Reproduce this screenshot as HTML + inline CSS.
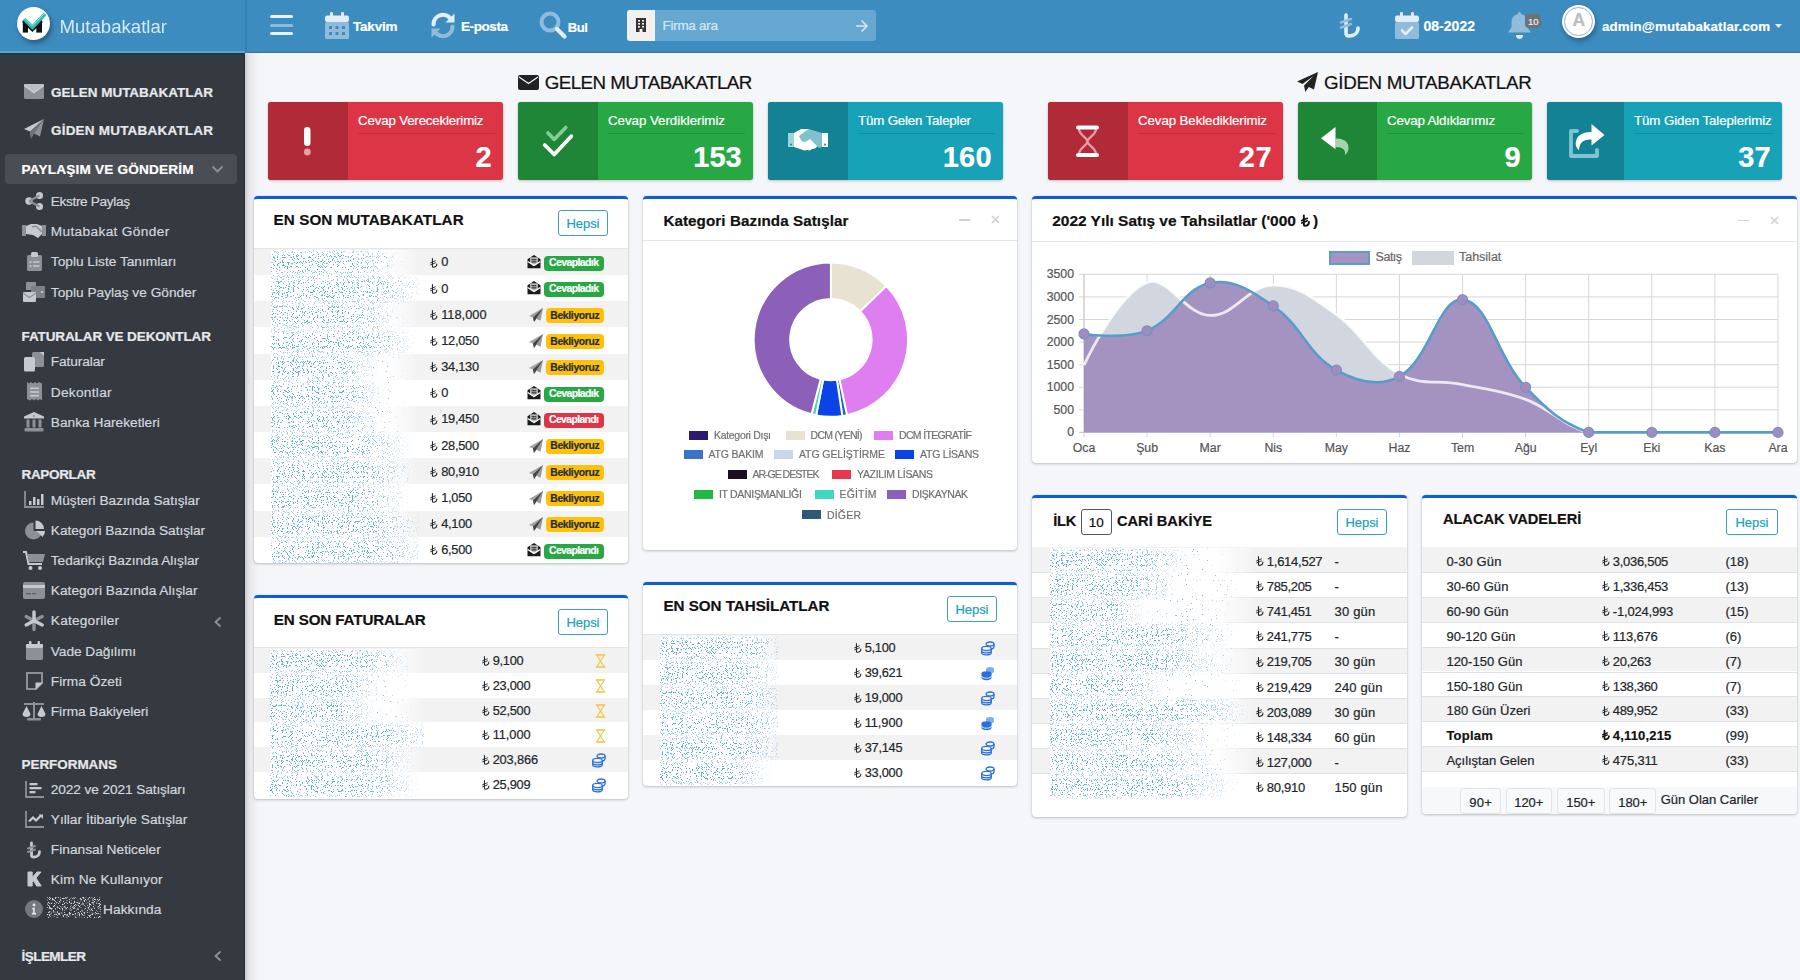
<!DOCTYPE html><html><head><meta charset="utf-8"><title>Mutabakatlar</title><style>
html,body{margin:0;padding:0;}
body{width:1800px;height:980px;overflow:hidden;position:relative;background:#f4f6f9;font-family:"Liberation Sans",sans-serif;}
.t{position:absolute;white-space:nowrap;line-height:1;-webkit-text-stroke-width:0.2px;}
.i{position:absolute;overflow:visible;}
.b{position:absolute;box-sizing:border-box;}
</style></head><body>
<svg width="0" height="0" style="position:absolute"><defs>
<symbol id="tl" viewBox="0 0 10 14"><path d="M3.2 0.5V11.6c0 .8.4 1.2 1.2 1.2 3 0 5-2 5-5" fill="none" stroke="currentColor" stroke-width="1.7" stroke-linecap="round"/><path d="M0.6 6.3L7.2 3.6M0.6 9.2L7.2 6.5" stroke="currentColor" stroke-width="1.5" stroke-linecap="round"/></symbol>
<filter id="nz" x="0" y="0" width="100%" height="100%"><feTurbulence type="fractalNoise" baseFrequency="1.2" numOctaves="1" seed="3"/><feColorMatrix type="matrix" values="0 0 0 0 0.12  0 0 0 0 0.38  0 0 0 0 0.8  30 0 0 0 -18"/></filter><filter id="nzm" x="0" y="0" width="100%" height="100%"><feTurbulence type="fractalNoise" baseFrequency="1.2" numOctaves="1" seed="5"/><feColorMatrix type="matrix" values="0 0 0 0 0.2  0 0 0 0 0.47  0 0 0 0 0.85  16 0 0 0 -10.1"/></filter><filter id="nzs" x="0" y="0" width="100%" height="100%"><feTurbulence type="fractalNoise" baseFrequency="1.2" numOctaves="1" seed="8"/><feColorMatrix type="matrix" values="0 0 0 0 0.25  0 0 0 0 0.47  0 0 0 0 0.8  30 0 0 0 -21.2"/></filter>
<filter id="nzw" x="0" y="0" width="100%" height="100%"><feTurbulence type="fractalNoise" baseFrequency="1.2" numOctaves="1" seed="7"/><feColorMatrix type="matrix" values="0 0 0 0 0.72  0 0 0 0 0.73  0 0 0 0 0.76  8 0 0 0 -4.2"/></filter>
<linearGradient id="fadeg" x1="0" y1="0" x2="1" y2="0"><stop offset="0" stop-color="#fff"/><stop offset=".62" stop-color="#fff"/><stop offset="1" stop-color="#000"/></linearGradient><mask id="fade" maskContentUnits="objectBoundingBox"><rect width="1" height="1" fill="url(#fadeg)"/></mask><linearGradient id="fadewg" x1="0" y1="0" x2="1" y2="0"><stop offset="0" stop-color="#fff"/><stop offset=".8" stop-color="#fff"/><stop offset="1" stop-color="#000"/></linearGradient><mask id="fadew" maskContentUnits="objectBoundingBox"><rect width="1" height="1" fill="url(#fadewg)"/></mask><mask id="fadevm" maskContentUnits="objectBoundingBox"><rect width="1" height="1" fill="url(#fadev)"/></mask><linearGradient id="fadev" x1="0" y1="0" x2="0" y2="1"><stop offset="0" stop-color="#222"/><stop offset=".3" stop-color="#fff"/><stop offset=".7" stop-color="#fff"/><stop offset="1" stop-color="#222"/></linearGradient></defs></svg>
<div class="b" style="left:245px;top:53px;width:14px;height:927px;background:linear-gradient(90deg,#c9ccd1,#e4e6ea 30%,#f4f6f9)"></div><div class="b" style="left:0;top:53px;width:245px;height:927px;background:#343a40"></div><div class="b" style="left:244px;top:53px;width:1px;height:927px;background:#2b3035"></div><div class="b" style="left:0;top:0;width:1800px;height:53px;background:#3c8cbf"></div><div class="b" style="left:0;top:51px;width:245px;height:2px;background:#5ea3c9"></div><div class="b" style="left:245px;top:52px;width:1555px;height:1px;background:#2f77a6"></div><div class="b" style="left:0;top:53px;width:245px;height:2px;background:#1f3a4f"></div><div class="b" style="left:245px;top:0;width:3px;height:53px;background:linear-gradient(90deg,#3279a8,#3c8cbf)"></div><div class="b" style="left:17px;top:7px;width:33px;height:33px;border-radius:50%;background:#fff;box-shadow:2px 3px 5px rgba(0,0,0,.35)"></div><svg class="i" style="left:17px;top:7px;width:33px;height:33px;" viewBox="0 0 33 33"><rect x="5.8" y="13.3" width="5.2" height="12.3" fill="#111"/><rect x="19.3" y="13.3" width="5.7" height="12.3" fill="#111"/><path d="M6.5 13.5L15.4 22.3 24.5 13.5" fill="none" stroke="#111" stroke-width="4"/><path d="M7.2 12L15.4 20.3 28 7" fill="none" stroke="#2bbdb2" stroke-width="3.8"/><path d="M7.8 11.4L15.4 19 27.3 6.5" fill="none" stroke="#8af2ee" stroke-width="0.9"/></svg><div class="t" style="left:59.50px;top:17.76px;font-size:18.6px;letter-spacing:0.001px;color:#e6f3fb;-webkit-text-stroke-width:0;opacity:.9;">Mutabakatlar</div><div class="b" style="left:270px;top:15px;width:23px;height:3.2px;border-radius:2px;background:#e8f2f9"></div><div class="b" style="left:270px;top:23.6px;width:23px;height:3.2px;border-radius:2px;background:#8fbcdb"></div><div class="b" style="left:270px;top:32px;width:23px;height:3.2px;border-radius:2px;background:#e8f2f9"></div><svg class="i" style="left:325px;top:12px;width:24px;height:27px;" viewBox="0 0 24 27"><rect x="0" y="3.5" width="24" height="6.5" rx="2" fill="#e3eef6"/><rect x="0" y="10" width="24" height="17" rx="1.5" fill="#8fbcdb"/><rect x="5" y="0" width="3" height="6" rx="1.3" fill="#e3eef6"/><rect x="16" y="0" width="3" height="6" rx="1.3" fill="#e3eef6"/><g fill="#3c8cbf"><rect x="4" y="14" width="3" height="3"/><rect x="10.5" y="14" width="3" height="3"/><rect x="17" y="14" width="3" height="3"/><rect x="4" y="20" width="3" height="3"/><rect x="10.5" y="20" width="3" height="3"/><rect x="17" y="20" width="3" height="3"/></g></svg><div class="t" style="left:353.00px;top:20.07px;font-size:13.5px;font-weight:bold;letter-spacing:-0.205px;color:#ffffff;">Takvim</div><svg class="i" style="left:430px;top:12px;width:26px;height:27px;" viewBox="0 0 26 27"><path d="M3.5 12.5A9.5 9.5 0 0 1 20.5 6.5" fill="none" stroke="#e3eef6" stroke-width="4.2" stroke-linecap="round"/><path d="M24.5 1.5v9h-9z" fill="#e3eef6"/><path d="M22.5 14.5A9.5 9.5 0 0 1 5.5 20.5" fill="none" stroke="#8fbcdb" stroke-width="4.2" stroke-linecap="round"/><path d="M1.5 25.5v-9h9z" fill="#8fbcdb"/></svg><div class="t" style="left:461.00px;top:20.07px;font-size:13.5px;font-weight:bold;letter-spacing:-0.417px;color:#ffffff;">E-posta</div><svg class="i" style="left:539px;top:11px;width:28px;height:28px;" viewBox="0 0 28 28"><circle cx="11" cy="11" r="8.5" fill="none" stroke="#8fbcdb" stroke-width="4"/><path d="M18 18l7.5 7.5" stroke="#e3eef6" stroke-width="4.2" stroke-linecap="round"/></svg><div class="t" style="left:567.80px;top:20.50px;font-size:13px;font-weight:bold;letter-spacing:-0.470px;color:#ffffff;">Bul</div><div class="b" style="left:627px;top:10px;width:249px;height:31px;border-radius:3px;background:#66a8d1"></div><div class="b" style="left:627px;top:10px;width:28px;height:31px;border-radius:3px 0 0 3px;background:#f3f1ef"></div><svg class="i" style="left:636px;top:18px;width:10px;height:14px;" viewBox="0 0 10 14"><path d="M0 0h10v14H6.5v-3h-3v3H0z" fill="#333"/><g fill="#f3f1ef"><rect x="2" y="2" width="2" height="1.6"/><rect x="6" y="2" width="2" height="1.6"/><rect x="2" y="5" width="2" height="1.6"/><rect x="6" y="5" width="2" height="1.6"/><rect x="2" y="8" width="2" height="1.6"/><rect x="6" y="8" width="2" height="1.6"/></g></svg><div class="t" style="left:662.50px;top:19.37px;font-size:13.5px;letter-spacing:-0.282px;color:#d4e8f5;">Firma ara</div><svg class="i" style="left:856px;top:20px;width:12px;height:12px;" viewBox="0 0 12 12"><path d="M0.5 6h10M6 1l5 5-5 5" fill="none" stroke="#d4e8f5" stroke-width="1.6" stroke-linecap="round" stroke-linejoin="round"/></svg><svg class="i" style="left:1339px;top:13px;width:22px;height:25px;" viewBox="0 0 22 25"><path d="M7 2v18c0 2 1 3 3 3 5 0 9-3 9-8" fill="none" stroke="#e3eef6" stroke-width="3.6" stroke-linecap="round"/><path d="M2 9.5l10-3.5M2 14.5l10-3.5" stroke="#8fbcdb" stroke-width="2.6" stroke-linecap="round"/></svg><svg class="i" style="left:1395px;top:12px;width:24px;height:27px;" viewBox="0 0 24 27"><rect x="0" y="3.5" width="24" height="6.5" rx="2" fill="#e3eef6"/><rect x="0" y="10" width="24" height="17" rx="1.5" fill="#8fbcdb"/><rect x="5" y="0" width="3" height="6" rx="1.3" fill="#e3eef6"/><rect x="16" y="0" width="3" height="6" rx="1.3" fill="#e3eef6"/><path d="M7 18.5l3.5 3.5 6.5-6.5" fill="none" stroke="#e3eef6" stroke-width="2.6" stroke-linecap="round" stroke-linejoin="round"/></svg><div class="t" style="left:1423.50px;top:19.45px;font-size:14px;font-weight:bold;letter-spacing:0.020px;color:#ffffff;">08-2022</div><svg class="i" style="left:1507px;top:12px;width:25px;height:27px;" viewBox="0 0 25 27"><path d="M12.5 2c5 0 8 3.5 8 8.5v5l3.5 5H1l3.5-5v-5C4.5 5.5 7.5 2 12.5 2z" fill="#8fbcdb"/><circle cx="12.5" cy="1.8" r="1.8" fill="#8fbcdb"/><path d="M9 23h7c0 2.5-1.5 4-3.5 4S9 25.5 9 23z" fill="#e3eef6"/></svg><div class="b" style="left:1525px;top:14px;width:16px;height:14px;border-radius:4px;background:#6c7278"></div><div class="t" style="left:1528.05px;top:16.66px;font-size:9.5px;letter-spacing:-0.067px;color:#f0f0f0;">10</div><div class="b" style="left:1562px;top:5px;width:33px;height:33px;border-radius:50%;background:#fff;box-shadow:1px 3px 5px rgba(0,0,0,.3)"></div><div class="b" style="left:1564px;top:7px;width:29px;height:29px;border-radius:50%;border:1.2px solid #8fb3cf"></div><div class="t" style="left:1572.48px;top:12.49px;font-size:17.5px;font-weight:bold;color:#bdbdbd;">A</div><div class="t" style="left:1602.00px;top:20.04px;font-size:13.3px;font-weight:bold;letter-spacing:0.134px;color:#ffffff;">admin@mutabakatlar.com</div><svg class="i" style="left:1775px;top:24px;width:7px;height:4px;" viewBox="0 0 7 4"><path d="M0 0h7L3.5 4z" fill="#e6f0f7"/></svg><svg class="i" style="left:24px;top:84px;width:20px;height:15px;" viewBox="0 0 20 15"><rect x="0" y="0" width="20" height="15" rx="1.5" fill="#8c9197"/><path d="M0.5 1.5L10 8.5l9.5-7" fill="none" stroke="#c6cad0" stroke-width="1.6"/><path d="M0 0h20v2L10 9 0 2z" fill="#c6cad0" opacity=".8"/></svg><div class="t" style="left:51.00px;top:85.57px;font-size:13.5px;font-weight:bold;letter-spacing:-0.014px;color:#e6e8eb;">GELEN MUTABAKATLAR</div><svg class="i" style="left:24px;top:119px;width:20px;height:20px;" viewBox="0 0 20 20"><path d="M20 0L0 10l6 2.5z" fill="#c6cad0"/><path d="M20 0L6 12.5l1 7 3-5 6 3z" fill="#8c9197"/><path d="M20 0L6 12.5 7 19.5z" fill="#6f747a"/></svg><div class="t" style="left:51.00px;top:123.57px;font-size:13.5px;font-weight:bold;letter-spacing:0.207px;color:#e6e8eb;">GİDEN MUTABAKATLAR</div><div class="b" style="left:5px;top:154px;width:232px;height:30px;border-radius:4px;background:#494e54"></div><div class="t" style="left:21.50px;top:163.09px;font-size:13.6px;font-weight:bold;letter-spacing:0.188px;color:#ffffff;">PAYLAŞIM VE GÖNDERİM</div><svg class="i" style="left:212px;top:166px;width:11px;height:7px;" viewBox="0 0 11 7"><path d="M1 1l4.5 4.5L10 1" fill="none" stroke="#8d9298" stroke-width="1.8" stroke-linecap="round"/></svg><svg class="i" style="left:25px;top:192px;width:19px;height:18px;" viewBox="0 0 19 18"><circle cx="14.5" cy="3.5" r="3.5" fill="#c6cad0"/><circle cx="14.5" cy="14.5" r="3.5" fill="#c6cad0"/><circle cx="4" cy="9" r="3.7" fill="#c6cad0"/><path d="M4 9L14.5 3.5M4 9l10.5 5.5" stroke="#8c9197" stroke-width="2"/></svg><div class="t" style="left:50.80px;top:194.90px;font-size:13.7px;letter-spacing:-0.373px;color:#d3d7dd;">Ekstre Paylaş</div><svg class="i" style="left:22px;top:223px;width:24px;height:16px;" viewBox="0 0 24 16"><rect x="0" y="2" width="4" height="11" fill="#8c9197"/><rect x="20" y="2" width="4" height="11" fill="#8c9197"/><path d="M4 3l5-2h6l5 2v8l-4 4-5-3-7-1z" fill="#c6cad0"/><path d="M10 4l4-1 6 6" fill="none" stroke="#8c9197" stroke-width="1.5"/></svg><div class="t" style="left:50.80px;top:225.30px;font-size:13.7px;letter-spacing:0.335px;color:#d3d7dd;">Mutabakat Gönder</div><svg class="i" style="left:27px;top:252px;width:15px;height:19px;" viewBox="0 0 15 19"><rect x="0" y="3" width="15" height="16" rx="1.5" fill="#8c9197"/><rect x="4" y="0" width="7" height="5" rx="1.5" fill="#c6cad0"/><g fill="#c8ccd1"><circle cx="3.5" cy="10" r="1"/><circle cx="3.5" cy="14" r="1"/><rect x="6" y="9.3" width="6.5" height="1.4"/><rect x="6" y="13.3" width="6.5" height="1.4"/></g></svg><div class="t" style="left:50.80px;top:255.00px;font-size:13.7px;letter-spacing:0.009px;color:#d3d7dd;">Toplu Liste Tanımları</div><svg class="i" style="left:23px;top:282px;width:22px;height:20px;" viewBox="0 0 22 20"><rect x="3" y="0" width="10" height="8" rx="1" fill="#8c9197"/><rect x="8" y="4" width="14" height="12" rx="1" fill="#7d8288"/><rect x="18" y="9" width="2" height="2" fill="#c6cad0"/><rect x="0" y="10" width="13" height="10" rx="1" fill="#c6cad0"/><path d="M0 11l6.5 4.5L13 11" fill="none" stroke="#8c9197" stroke-width="1.2"/></svg><div class="t" style="left:50.80px;top:286.10px;font-size:13.7px;letter-spacing:0.013px;color:#d3d7dd;">Toplu Paylaş ve Gönder</div><div class="t" style="left:21.50px;top:330.27px;font-size:13.5px;font-weight:bold;letter-spacing:-0.107px;color:#e6e8eb;">FATURALAR VE DEKONTLAR</div><svg class="i" style="left:24px;top:352px;width:20px;height:20px;" viewBox="0 0 20 20"><rect x="8" y="0" width="12" height="15" rx="1.5" fill="#8c9197"/><path d="M16 0h4v4z" fill="#c6cad0"/><rect x="0" y="5" width="11" height="14.5" rx="1.5" fill="#c6cad0"/></svg><div class="t" style="left:50.80px;top:355.40px;font-size:13.7px;letter-spacing:-0.096px;color:#d3d7dd;">Faturalar</div><svg class="i" style="left:27px;top:382px;width:15px;height:20px;" viewBox="0 0 15 20"><path d="M0 0l2 1.5 2-1.5 2 1.5 2-1.5 2 1.5 2-1.5 3 1.5V18.5l-2-1.5-2 1.5-2-1.5-2 1.5-2-1.5-2 1.5-3-1.5z" fill="#8c9197"/><g fill="#c6cad0"><rect x="3" y="5.5" width="9" height="1.6"/><rect x="3" y="9.2" width="9" height="1.6"/><rect x="3" y="12.9" width="9" height="1.6"/></g></svg><div class="t" style="left:50.80px;top:386.00px;font-size:13.7px;letter-spacing:0.278px;color:#d3d7dd;">Dekontlar</div><svg class="i" style="left:24px;top:412px;width:20px;height:20px;" viewBox="0 0 20 20"><path d="M10 0l10 4.5v2H0v-2z" fill="#c6cad0"/><circle cx="10" cy="4" r="1" fill="#8c9197"/><g fill="#8c9197"><rect x="2.5" y="7.5" width="3" height="8"/><rect x="8.5" y="7.5" width="3" height="8"/><rect x="14.5" y="7.5" width="3" height="8"/><rect x="0.5" y="16" width="19" height="3.5" rx="1"/></g></svg><div class="t" style="left:50.80px;top:415.80px;font-size:13.7px;letter-spacing:0.013px;color:#d3d7dd;">Banka Hareketleri</div><div class="t" style="left:21.50px;top:468.27px;font-size:13.5px;font-weight:bold;letter-spacing:-0.328px;color:#e6e8eb;">RAPORLAR</div><svg class="i" style="left:24px;top:491px;width:20px;height:17px;" viewBox="0 0 20 17"><path d="M1 0v16h19" fill="none" stroke="#8c9197" stroke-width="1.8"/><g fill="#c6cad0"><rect x="5" y="10" width="2.5" height="4"/><rect x="9" y="6" width="2.5" height="8"/><rect x="13" y="8" width="2.5" height="6"/><rect x="17" y="3" width="2.5" height="11"/></g></svg><div class="t" style="left:50.80px;top:494.30px;font-size:13.7px;letter-spacing:-0.005px;color:#d3d7dd;">Müşteri Bazında Satışlar</div><svg class="i" style="left:25px;top:520px;width:20px;height:20px;" viewBox="0 0 20 20"><path d="M8.5 2.5A8.5 8.5 0 1 0 17 11H8.5z" fill="#8c9197"/><path d="M10.5 0.5A8.5 8.5 0 0 1 19 9h-8.5z" fill="#c6cad0"/><path d="M11.5 11H20a8.5 8.5 0 0 1-2.5 6z" fill="#c6cad0"/></svg><div class="t" style="left:50.80px;top:524.40px;font-size:13.7px;letter-spacing:-0.038px;color:#d3d7dd;">Kategori Bazında Satışlar</div><svg class="i" style="left:23px;top:551px;width:22px;height:19px;" viewBox="0 0 22 19"><path d="M0 1h3l2.5 12H19" fill="none" stroke="#c6cad0" stroke-width="2"/><path d="M4.5 3H22l-2 8H6z" fill="#8c9197"/><circle cx="7.5" cy="17" r="2" fill="#c6cad0"/><circle cx="17" cy="17" r="2" fill="#c6cad0"/></svg><div class="t" style="left:50.80px;top:554.20px;font-size:13.7px;letter-spacing:-0.036px;color:#d3d7dd;">Tedarikçi Bazında Alışlar</div><svg class="i" style="left:23px;top:582px;width:22px;height:17px;" viewBox="0 0 22 17"><rect x="0" y="0" width="22" height="17" rx="2" fill="#8c9197"/><rect x="0" y="3" width="22" height="3" fill="#c6cad0"/><rect x="3" y="11" width="5" height="1.3" fill="#5a5f65"/><rect x="9" y="11" width="4" height="1.3" fill="#5a5f65"/></svg><div class="t" style="left:50.80px;top:584.40px;font-size:13.7px;letter-spacing:0.029px;color:#d3d7dd;">Kategori Bazında Alışlar</div><svg class="i" style="left:25px;top:611px;width:18px;height:19px;" viewBox="0 0 18 19"><path d="M9 9.7L1.2 5.5M9 9.7l8.2-4.2M9 9.7v8.8" stroke="#8c9197" stroke-width="3.4" stroke-linecap="round"/><path d="M9 9.7V1M9 9.7L1.2 14M9 9.7l8.2 4.3" stroke="#c6cad0" stroke-width="3.4" stroke-linecap="round"/></svg><div class="t" style="left:50.80px;top:614.10px;font-size:13.7px;letter-spacing:0.201px;color:#d3d7dd;">Kategoriler</div><svg class="i" style="left:214px;top:617px;width:7px;height:10px;" viewBox="0 0 7 10"><path d="M6 1L1.5 5 6 9" fill="none" stroke="#8d9298" stroke-width="1.8" stroke-linecap="round"/></svg><svg class="i" style="left:26px;top:641px;width:17px;height:19px;" viewBox="0 0 17 19"><rect x="0" y="3" width="17" height="16" rx="1.5" fill="#8c9197"/><rect x="0" y="3" width="17" height="4" rx="1" fill="#c6cad0"/><rect x="3" y="0" width="2.5" height="4.5" rx="1" fill="#c6cad0"/><rect x="11.5" y="0" width="2.5" height="4.5" rx="1" fill="#c6cad0"/></svg><div class="t" style="left:50.80px;top:644.90px;font-size:13.7px;letter-spacing:-0.043px;color:#d3d7dd;">Vade Dağılımı</div><svg class="i" style="left:26px;top:672px;width:17px;height:18px;" viewBox="0 0 17 18"><path d="M1 1h15v10l-6 6H1z" fill="none" stroke="#8c9197" stroke-width="2"/><path d="M9.5 17.5v-7h7.5z" fill="#c6cad0"/></svg><div class="t" style="left:50.80px;top:675.40px;font-size:13.7px;letter-spacing:0.028px;color:#d3d7dd;">Firma Özeti</div><svg class="i" style="left:22px;top:701px;width:24px;height:20px;" viewBox="0 0 24 20"><rect x="11" y="1" width="2" height="16" fill="#8c9197"/><rect x="5" y="17" width="14" height="2.5" rx="1" fill="#8c9197"/><rect x="2" y="2" width="20" height="2" fill="#8c9197"/><path d="M0.5 13L4.5 5l4 8c0 2-1.8 3-4 3s-4-1-4-3z" fill="#c6cad0"/><path d="M15.5 13L19.5 5l4 8c0 2-1.8 3-4 3s-4-1-4-3z" fill="#c6cad0"/></svg><div class="t" style="left:50.80px;top:705.00px;font-size:13.7px;letter-spacing:-0.034px;color:#d3d7dd;">Firma Bakiyeleri</div><div class="t" style="left:21.50px;top:758.27px;font-size:13.5px;font-weight:bold;letter-spacing:-0.056px;color:#e6e8eb;">PERFORMANS</div><svg class="i" style="left:25px;top:781px;width:19px;height:17px;" viewBox="0 0 19 17"><path d="M1 0v16h18" fill="none" stroke="#8c9197" stroke-width="1.8"/><g fill="#c6cad0"><rect x="4.5" y="2" width="8" height="2.3"/><rect x="4.5" y="6" width="12" height="2.3"/><rect x="4.5" y="10" width="6" height="2.3"/></g></svg><div class="t" style="left:50.80px;top:783.40px;font-size:13.7px;letter-spacing:-0.108px;color:#d3d7dd;">2022 ve 2021 Satışları</div><svg class="i" style="left:25px;top:811px;width:19px;height:17px;" viewBox="0 0 19 17"><path d="M1 0v16h18" fill="none" stroke="#8c9197" stroke-width="1.8"/><path d="M4 10.5l4-4 3 3 5-5" fill="none" stroke="#c6cad0" stroke-width="2.2"/><path d="M13.5 3.5H18V8z" fill="#c6cad0"/></svg><div class="t" style="left:50.80px;top:813.40px;font-size:13.7px;letter-spacing:0.014px;color:#d3d7dd;">Yıllar İtibariyle Satışlar</div><svg class="i" style="left:27px;top:842px;width:14px;height:17px;" viewBox="0 0 14 17"><path d="M4.5 1v12c0 1.5.8 2.2 2.2 2.2 3 0 5.8-2 5.8-5.5" fill="none" stroke="#c6cad0" stroke-width="2.8" stroke-linecap="round"/><path d="M1 6.5l7-2.5M1 10l7-2.5" stroke="#8c9197" stroke-width="2" stroke-linecap="round"/></svg><div class="t" style="left:50.80px;top:843.00px;font-size:13.7px;letter-spacing:0.027px;color:#d3d7dd;">Finansal Neticeler</div><svg class="i" style="left:27px;top:871px;width:14px;height:16px;" viewBox="0 0 14 16"><path d="M1 1h4.2v5.5L10 1h4l-5 6 5.2 8h-4.5L6.6 9.8 5.2 11.3V15H1z" fill="#c6cad0" stroke="#c6cad0" stroke-width="1" stroke-linejoin="round"/></svg><div class="t" style="left:50.80px;top:873.20px;font-size:13.7px;letter-spacing:0.135px;color:#d3d7dd;">Kim Ne Kullanıyor</div><svg class="i" style="left:25px;top:900px;width:18px;height:18px;" viewBox="0 0 18 18"><circle cx="9" cy="9" r="9" fill="#74797f"/><circle cx="9" cy="5" r="1.4" fill="#e8e8e8"/><path d="M7.3 7.8h2.4v5h1.3v1.7H6.9v-1.7h1.3v-3.3H7.3z" fill="#e8e8e8"/></svg><svg class="i" style="left:47px;top:897px;width:54px;height:21px"><rect width="54" height="21" filter="url(#nzw)"/></svg><div class="t" style="left:103.00px;top:902.60px;font-size:13.7px;letter-spacing:0.082px;color:#d3d7dd;">Hakkında</div><div class="t" style="left:21.50px;top:950.27px;font-size:13.5px;font-weight:bold;letter-spacing:-0.536px;color:#e6e8eb;">İŞLEMLER</div><svg class="i" style="left:214px;top:951px;width:7px;height:10px;" viewBox="0 0 7 10"><path d="M6 1L1.5 5 6 9" fill="none" stroke="#8d9298" stroke-width="1.8" stroke-linecap="round"/></svg><svg class="i" style="left:518px;top:75px;width:21px;height:15px;" viewBox="0 0 21 15"><rect x="0" y="0" width="21" height="15" rx="2" fill="#222"/><path d="M1 2l9.5 6.5L20 2" fill="none" stroke="#f4f6f9" stroke-width="1.3"/></svg><div class="t" style="left:544.70px;top:74.09px;font-size:18.8px;letter-spacing:-0.572px;color:#111111;">GELEN MUTABAKATLAR</div><svg class="i" style="left:1297px;top:72px;width:21px;height:20px;" viewBox="0 0 21 20"><path d="M21 0L0 9.5l5.5 2.6L16.5 4 7 13.5l1.3 6.5 3.5-5 5.2 2.6z" fill="#222"/></svg><div class="t" style="left:1324.00px;top:74.09px;font-size:18.8px;letter-spacing:-0.325px;color:#111111;">GİDEN MUTABAKATLAR</div><div class="b" style="left:268px;top:102px;width:235px;height:78px;border-radius:3px;background:#dc3545;box-shadow:0 0 1px rgba(0,0,0,.13),0 1px 3px rgba(0,0,0,.2);overflow:hidden"><div class="b" style="left:0;top:0;width:80px;height:78px;background:#b02a37"></div></div><div class="t" style="left:358.00px;top:114.44px;font-size:13.3px;letter-spacing:-0.162px;color:#ffffff;">Cevap Vereceklerimiz</div><div class="b" style="left:358px;top:132.5px;width:137px;height:1.2px;background:rgba(0,0,0,.13)"></div><div class="t" style="left:475.57px;top:142.65px;font-size:29px;font-weight:bold;color:#ffffff;">2</div><div class="b" style="left:518px;top:102px;width:235px;height:78px;border-radius:3px;background:#28a745;box-shadow:0 0 1px rgba(0,0,0,.13),0 1px 3px rgba(0,0,0,.2);overflow:hidden"><div class="b" style="left:0;top:0;width:80px;height:78px;background:#1f8537"></div></div><div class="t" style="left:608.00px;top:114.44px;font-size:13.3px;letter-spacing:-0.028px;color:#ffffff;">Cevap Verdiklerimiz</div><div class="b" style="left:608px;top:132.5px;width:137px;height:1.2px;background:rgba(0,0,0,.13)"></div><div class="t" style="left:693.30px;top:142.65px;font-size:29px;font-weight:bold;letter-spacing:0.007px;color:#ffffff;">153</div><div class="b" style="left:768px;top:102px;width:235px;height:78px;border-radius:3px;background:#17a2b8;box-shadow:0 0 1px rgba(0,0,0,.13),0 1px 3px rgba(0,0,0,.2);overflow:hidden"><div class="b" style="left:0;top:0;width:80px;height:78px;background:#128294"></div></div><div class="t" style="left:858.00px;top:114.44px;font-size:13.3px;letter-spacing:-0.161px;color:#ffffff;">Tüm Gelen Talepler</div><div class="b" style="left:858px;top:132.5px;width:137px;height:1.2px;background:rgba(0,0,0,.13)"></div><div class="t" style="left:942.70px;top:142.65px;font-size:29px;font-weight:bold;letter-spacing:0.307px;color:#ffffff;">160</div><div class="b" style="left:1048px;top:102px;width:235px;height:78px;border-radius:3px;background:#dc3545;box-shadow:0 0 1px rgba(0,0,0,.13),0 1px 3px rgba(0,0,0,.2);overflow:hidden"><div class="b" style="left:0;top:0;width:80px;height:78px;background:#b02a37"></div></div><div class="t" style="left:1138.00px;top:114.44px;font-size:13.3px;letter-spacing:-0.090px;color:#ffffff;">Cevap Beklediklerimiz</div><div class="b" style="left:1138px;top:132.5px;width:137px;height:1.2px;background:rgba(0,0,0,.13)"></div><div class="t" style="left:1238.70px;top:142.65px;font-size:29px;font-weight:bold;letter-spacing:0.743px;color:#ffffff;">27</div><div class="b" style="left:1298px;top:102px;width:234px;height:78px;border-radius:3px;background:#28a745;box-shadow:0 0 1px rgba(0,0,0,.13),0 1px 3px rgba(0,0,0,.2);overflow:hidden"><div class="b" style="left:0;top:0;width:79px;height:78px;background:#1f8537"></div></div><div class="t" style="left:1387.00px;top:114.44px;font-size:13.3px;letter-spacing:-0.152px;color:#ffffff;">Cevap Aldıklarımız</div><div class="b" style="left:1387px;top:132.5px;width:137px;height:1.2px;background:rgba(0,0,0,.13)"></div><div class="t" style="left:1504.57px;top:142.65px;font-size:29px;font-weight:bold;color:#ffffff;">9</div><div class="b" style="left:1547px;top:102px;width:235px;height:78px;border-radius:3px;background:#17a2b8;box-shadow:0 0 1px rgba(0,0,0,.13),0 1px 3px rgba(0,0,0,.2);overflow:hidden"><div class="b" style="left:0;top:0;width:77px;height:78px;background:#128294"></div></div><div class="t" style="left:1634.00px;top:114.44px;font-size:13.3px;letter-spacing:-0.079px;color:#ffffff;">Tüm Giden Taleplerimiz</div><div class="b" style="left:1634px;top:132.5px;width:140px;height:1.2px;background:rgba(0,0,0,.13)"></div><div class="t" style="left:1738.20px;top:142.65px;font-size:29px;font-weight:bold;letter-spacing:0.243px;color:#ffffff;">37</div><svg class="i" style="left:303px;top:126px;width:10px;height:30px;" viewBox="0 0 10 30"><rect x="1" y="1" width="6.5" height="19" rx="3.2" fill="#fff"/><circle cx="4.3" cy="26" r="3.4" fill="#e8a1a8"/></svg><svg class="i" style="left:543px;top:125px;width:30px;height:31px;" viewBox="0 0 30 31"><path d="M5 8l6.2 6.4L22.8 2.5" fill="none" stroke="#86cc95" stroke-width="3.6" stroke-linecap="round" stroke-linejoin="round"/><path d="M1.7 20l9.5 9.5 17.1-18.3" fill="none" stroke="#fff" stroke-width="3.8" stroke-linecap="round" stroke-linejoin="round"/></svg><svg class="i" style="left:788px;top:128px;width:40px;height:25px;" viewBox="0 0 40 25"><rect x="0" y="5" width="6" height="14" fill="#9fd3dc"/><rect x="34" y="5" width="6" height="14" fill="#fff"/><path d="M6 5l7-4h6l4 1-7 7c-1 1-.5 2.5 1 2.5l5-3 9 8-4 4-3 .5-2 1.5-3-.5-2.5.5L6 19z" fill="#fff"/><path d="M11 8l8-6h5l10 3v14l-3 1-9-9-3 2c-2 1.5-5 1-6-1z" fill="#7fc2cd"/><rect x="34" y="5" width="6" height="14" fill="#fff"/><circle cx="3" cy="16.5" r="1" fill="#128294"/><circle cx="37" cy="16.5" r="1" fill="#128294"/></svg><svg class="i" style="left:1075px;top:125px;width:25px;height:33px;" viewBox="0 0 25 33"><path d="M4 4c0 6 8.5 9 8.5 12.5S4 23 4 29M21 4c0 6-8.5 9-8.5 12.5S21 23 21 29" fill="none" stroke="#e99aa2" stroke-width="2.4"/><rect x="1" y="0.5" width="23" height="4" rx="2" fill="#fff"/><rect x="1" y="28" width="23" height="4" rx="2" fill="#fff"/></svg><svg class="i" style="left:1321px;top:127px;width:33px;height:29px;" viewBox="0 0 33 29"><path d="M14.5 11.5c6 0 13 1.5 13 9.5 0 3-1.5 5.5-3.5 7 1-5-2-8-9.5-8z" fill="#a3d4ad"/><path d="M14.5 0L0 11.3l14.5 11z" fill="#fff"/></svg><svg class="i" style="left:1568px;top:124px;width:37px;height:34px;" viewBox="0 0 37 34"><path d="M9 7H3v25h26v-6" fill="none" stroke="#7fc4cf" stroke-width="3.8" stroke-linecap="round" stroke-linejoin="round"/><path d="M23.5 0L36.5 11 23.5 21.5v-6c-7 0-12 1.5-12.5 11-3-3-4-6-3-9.5 1.5-6 7.5-9 15.5-9z" fill="#fff"/></svg><div class="b" style="left:254px;top:196px;width:374px;height:367px;background:#fff;border-radius:4px;border-top:3px solid #0b5ed7;box-shadow:0 0 1px rgba(0,0,0,.2),0 1px 3px rgba(0,0,0,.22)"></div><div class="b" style="left:254px;top:248px;width:374px;height:1px;background:#e4e6e9"></div><div class="t" style="left:273.60px;top:212.43px;font-size:15.2px;font-weight:bold;letter-spacing:0.088px;color:#111;">EN SON MUTABAKATLAR</div><div class="b" style="left:558px;top:210px;width:50px;height:26px;border:1px solid #3fa3b3;border-radius:3px"></div><div class="t" style="left:566.50px;top:216.90px;font-size:13px;letter-spacing:-0.059px;color:#17a2b8;">Hepsi</div><div class="b" style="left:254px;top:249.00px;width:374px;height:26.17px;background:#f2f2f2"></div><div class="b" style="left:254px;top:301.33px;width:374px;height:26.17px;background:#f2f2f2"></div><div class="b" style="left:254px;top:353.67px;width:374px;height:26.17px;background:#f2f2f2"></div><div class="b" style="left:254px;top:406.00px;width:374px;height:26.17px;background:#f2f2f2"></div><div class="b" style="left:254px;top:458.33px;width:374px;height:26.17px;background:#f2f2f2"></div><div class="b" style="left:254px;top:510.67px;width:374px;height:26.17px;background:#f2f2f2"></div><svg class="i" style="left:271px;top:250px;width:148px;height:313.0px;overflow:hidden"><rect width="148" height="314.0" fill="#fff" opacity=".95" mask="url(#fadew)"/><g mask="url(#fadew)"><rect width="140" height="314.0" filter="url(#nzs)"/></g><g mask="url(#fade)"><g mask="url(#fadevm)"><rect x="0" y="-2.0" width="131" height="30.2" filter="url(#nz)"/></g></g><g mask="url(#fade)"><g mask="url(#fadevm)"><rect x="0" y="24.2" width="161" height="30.2" filter="url(#nz)"/></g></g><g mask="url(#fade)"><g mask="url(#fadevm)"><rect x="0" y="50.3" width="130" height="30.2" filter="url(#nz)"/></g></g><g mask="url(#fade)"><g mask="url(#fadevm)"><rect x="0" y="76.5" width="148" height="30.2" filter="url(#nz)"/></g></g><g mask="url(#fade)"><g mask="url(#fadevm)"><rect x="0" y="102.7" width="108" height="30.2" filter="url(#nz)"/></g></g><g mask="url(#fade)"><g mask="url(#fadevm)"><rect x="0" y="128.8" width="117" height="30.2" filter="url(#nz)"/></g></g><g mask="url(#fade)"><g mask="url(#fadevm)"><rect x="0" y="155.0" width="111" height="30.2" filter="url(#nz)"/></g></g><g mask="url(#fade)"><g mask="url(#fadevm)"><rect x="0" y="181.2" width="143" height="30.2" filter="url(#nz)"/></g></g><g mask="url(#fade)"><g mask="url(#fadevm)"><rect x="0" y="207.3" width="148" height="30.2" filter="url(#nz)"/></g></g><g mask="url(#fade)"><g mask="url(#fadevm)"><rect x="0" y="233.5" width="139" height="30.2" filter="url(#nz)"/></g></g><g mask="url(#fade)"><g mask="url(#fadevm)"><rect x="0" y="259.7" width="158" height="30.2" filter="url(#nz)"/></g></g><g mask="url(#fade)"><g mask="url(#fadevm)"><rect x="0" y="285.8" width="165" height="30.2" filter="url(#nz)"/></g></g></svg><svg class="i" style="left:430px;top:257.57px;width:7.30px;height:9.73px;color:#212529" viewBox="0 0 9 12"><path d="M3 0.6V10.2c0 .8.5 1.2 1.2 1.2 2.6 0 4.2-1.6 4.2-4" fill="none" stroke="currentColor" stroke-width="1.32" stroke-linecap="round"/><path d="M0.7 5.9L6.6 3.5M0.7 8.4L6.6 6" stroke="currentColor" stroke-width="1.1" stroke-linecap="round"/></svg><div class="t" style="left:441.14px;top:256.46px;font-size:12.8px;color:#212529;">0</div><svg class="i" style="left:527px;top:255.3px;width:14px;height:14px;" viewBox="0 0 14 14"><path d="M7 0L0.5 4.3V13.3H13.5V4.3z" fill="#1b1b1b"/><path d="M3 2.3H11V8.6L7 11 3 8.6z" fill="#b4b4b4"/><rect x="4.6" y="4.2" width="4.8" height="1.1" fill="#2a2a2a"/><rect x="4.6" y="6.3" width="4.8" height="1.1" fill="#2a2a2a"/><path d="M0.7 6.6L7 10.6 13.3 6.6" fill="none" stroke="#fff" stroke-width="1.2"/></svg><div class="b" style="left:544px;top:255.8px;width:60px;height:15px;border-radius:4px;background:#28a745"></div><div class="t" style="left:549.00px;top:258.30px;font-size:10.4px;font-weight:bold;letter-spacing:-0.541px;color:#fff;">Cevapladık</div><svg class="i" style="left:430px;top:283.74px;width:7.30px;height:9.73px;color:#212529" viewBox="0 0 9 12"><path d="M3 0.6V10.2c0 .8.5 1.2 1.2 1.2 2.6 0 4.2-1.6 4.2-4" fill="none" stroke="currentColor" stroke-width="1.32" stroke-linecap="round"/><path d="M0.7 5.9L6.6 3.5M0.7 8.4L6.6 6" stroke="currentColor" stroke-width="1.1" stroke-linecap="round"/></svg><div class="t" style="left:441.14px;top:282.63px;font-size:12.8px;color:#212529;">0</div><svg class="i" style="left:527px;top:281.4666666666667px;width:14px;height:14px;" viewBox="0 0 14 14"><path d="M7 0L0.5 4.3V13.3H13.5V4.3z" fill="#1b1b1b"/><path d="M3 2.3H11V8.6L7 11 3 8.6z" fill="#b4b4b4"/><rect x="4.6" y="4.2" width="4.8" height="1.1" fill="#2a2a2a"/><rect x="4.6" y="6.3" width="4.8" height="1.1" fill="#2a2a2a"/><path d="M0.7 6.6L7 10.6 13.3 6.6" fill="none" stroke="#fff" stroke-width="1.2"/></svg><div class="b" style="left:544px;top:281.9666666666667px;width:60px;height:15px;border-radius:4px;background:#28a745"></div><div class="t" style="left:549.00px;top:284.46px;font-size:10.4px;font-weight:bold;letter-spacing:-0.541px;color:#fff;">Cevapladık</div><svg class="i" style="left:430px;top:309.91px;width:7.30px;height:9.73px;color:#212529" viewBox="0 0 9 12"><path d="M3 0.6V10.2c0 .8.5 1.2 1.2 1.2 2.6 0 4.2-1.6 4.2-4" fill="none" stroke="currentColor" stroke-width="1.32" stroke-linecap="round"/><path d="M0.7 5.9L6.6 3.5M0.7 8.4L6.6 6" stroke="currentColor" stroke-width="1.1" stroke-linecap="round"/></svg><div class="t" style="left:441.14px;top:308.80px;font-size:12.8px;letter-spacing:0.032px;color:#212529;">118,000</div><svg class="i" style="left:529px;top:307.8333333333333px;width:14px;height:14px;" viewBox="0 0 14 14"><path d="M14 0L0 8l4 1.6z" fill="#a3a3a3"/><path d="M14 0L4 9.6 5 14l2.5-3.2 4 2z" fill="#9a9a9a"/><path d="M14 0L4 9.6 5 14z" fill="#444"/></svg><div class="b" style="left:546px;top:308.1333333333333px;width:58px;height:15px;border-radius:4px;background:#ffc107"></div><div class="t" style="left:550.25px;top:310.63px;font-size:10.4px;font-weight:bold;letter-spacing:-0.339px;color:#1f2d3d;">Bekliyoruz</div><svg class="i" style="left:430px;top:336.07px;width:7.30px;height:9.73px;color:#212529" viewBox="0 0 9 12"><path d="M3 0.6V10.2c0 .8.5 1.2 1.2 1.2 2.6 0 4.2-1.6 4.2-4" fill="none" stroke="currentColor" stroke-width="1.32" stroke-linecap="round"/><path d="M0.7 5.9L6.6 3.5M0.7 8.4L6.6 6" stroke="currentColor" stroke-width="1.1" stroke-linecap="round"/></svg><div class="t" style="left:441.14px;top:334.96px;font-size:12.8px;letter-spacing:-0.228px;color:#212529;">12,050</div><svg class="i" style="left:529px;top:334.0px;width:14px;height:14px;" viewBox="0 0 14 14"><path d="M14 0L0 8l4 1.6z" fill="#a3a3a3"/><path d="M14 0L4 9.6 5 14l2.5-3.2 4 2z" fill="#9a9a9a"/><path d="M14 0L4 9.6 5 14z" fill="#444"/></svg><div class="b" style="left:546px;top:334.3px;width:58px;height:15px;border-radius:4px;background:#ffc107"></div><div class="t" style="left:550.25px;top:336.80px;font-size:10.4px;font-weight:bold;letter-spacing:-0.339px;color:#1f2d3d;">Bekliyoruz</div><svg class="i" style="left:430px;top:362.24px;width:7.30px;height:9.73px;color:#212529" viewBox="0 0 9 12"><path d="M3 0.6V10.2c0 .8.5 1.2 1.2 1.2 2.6 0 4.2-1.6 4.2-4" fill="none" stroke="currentColor" stroke-width="1.32" stroke-linecap="round"/><path d="M0.7 5.9L6.6 3.5M0.7 8.4L6.6 6" stroke="currentColor" stroke-width="1.1" stroke-linecap="round"/></svg><div class="t" style="left:441.14px;top:361.13px;font-size:12.8px;letter-spacing:-0.228px;color:#212529;">34,130</div><svg class="i" style="left:529px;top:360.1666666666667px;width:14px;height:14px;" viewBox="0 0 14 14"><path d="M14 0L0 8l4 1.6z" fill="#a3a3a3"/><path d="M14 0L4 9.6 5 14l2.5-3.2 4 2z" fill="#9a9a9a"/><path d="M14 0L4 9.6 5 14z" fill="#444"/></svg><div class="b" style="left:546px;top:360.4666666666667px;width:58px;height:15px;border-radius:4px;background:#ffc107"></div><div class="t" style="left:550.25px;top:362.96px;font-size:10.4px;font-weight:bold;letter-spacing:-0.339px;color:#1f2d3d;">Bekliyoruz</div><svg class="i" style="left:430px;top:388.41px;width:7.30px;height:9.73px;color:#212529" viewBox="0 0 9 12"><path d="M3 0.6V10.2c0 .8.5 1.2 1.2 1.2 2.6 0 4.2-1.6 4.2-4" fill="none" stroke="currentColor" stroke-width="1.32" stroke-linecap="round"/><path d="M0.7 5.9L6.6 3.5M0.7 8.4L6.6 6" stroke="currentColor" stroke-width="1.1" stroke-linecap="round"/></svg><div class="t" style="left:441.14px;top:387.30px;font-size:12.8px;color:#212529;">0</div><svg class="i" style="left:527px;top:386.1333333333334px;width:14px;height:14px;" viewBox="0 0 14 14"><path d="M7 0L0.5 4.3V13.3H13.5V4.3z" fill="#1b1b1b"/><path d="M3 2.3H11V8.6L7 11 3 8.6z" fill="#b4b4b4"/><rect x="4.6" y="4.2" width="4.8" height="1.1" fill="#2a2a2a"/><rect x="4.6" y="6.3" width="4.8" height="1.1" fill="#2a2a2a"/><path d="M0.7 6.6L7 10.6 13.3 6.6" fill="none" stroke="#fff" stroke-width="1.2"/></svg><div class="b" style="left:544px;top:386.6333333333334px;width:60px;height:15px;border-radius:4px;background:#28a745"></div><div class="t" style="left:549.00px;top:389.13px;font-size:10.4px;font-weight:bold;letter-spacing:-0.541px;color:#fff;">Cevapladık</div><svg class="i" style="left:430px;top:414.57px;width:7.30px;height:9.73px;color:#212529" viewBox="0 0 9 12"><path d="M3 0.6V10.2c0 .8.5 1.2 1.2 1.2 2.6 0 4.2-1.6 4.2-4" fill="none" stroke="currentColor" stroke-width="1.32" stroke-linecap="round"/><path d="M0.7 5.9L6.6 3.5M0.7 8.4L6.6 6" stroke="currentColor" stroke-width="1.1" stroke-linecap="round"/></svg><div class="t" style="left:441.14px;top:413.46px;font-size:12.8px;letter-spacing:-0.228px;color:#212529;">19,450</div><svg class="i" style="left:527px;top:412.3px;width:14px;height:14px;" viewBox="0 0 14 14"><path d="M7 0L0.5 4.3V13.3H13.5V4.3z" fill="#1b1b1b"/><path d="M3 2.3H11V8.6L7 11 3 8.6z" fill="#b4b4b4"/><rect x="4.6" y="4.2" width="4.8" height="1.1" fill="#2a2a2a"/><rect x="4.6" y="6.3" width="4.8" height="1.1" fill="#2a2a2a"/><path d="M0.7 6.6L7 10.6 13.3 6.6" fill="none" stroke="#fff" stroke-width="1.2"/></svg><div class="b" style="left:544px;top:412.8px;width:60px;height:15px;border-radius:4px;background:#dc3545"></div><div class="t" style="left:549.00px;top:415.30px;font-size:10.4px;font-weight:bold;letter-spacing:-0.604px;color:#fff;">Cevaplandı</div><svg class="i" style="left:430px;top:440.74px;width:7.30px;height:9.73px;color:#212529" viewBox="0 0 9 12"><path d="M3 0.6V10.2c0 .8.5 1.2 1.2 1.2 2.6 0 4.2-1.6 4.2-4" fill="none" stroke="currentColor" stroke-width="1.32" stroke-linecap="round"/><path d="M0.7 5.9L6.6 3.5M0.7 8.4L6.6 6" stroke="currentColor" stroke-width="1.1" stroke-linecap="round"/></svg><div class="t" style="left:441.14px;top:439.63px;font-size:12.8px;letter-spacing:-0.228px;color:#212529;">28,500</div><svg class="i" style="left:529px;top:438.6666666666667px;width:14px;height:14px;" viewBox="0 0 14 14"><path d="M14 0L0 8l4 1.6z" fill="#a3a3a3"/><path d="M14 0L4 9.6 5 14l2.5-3.2 4 2z" fill="#9a9a9a"/><path d="M14 0L4 9.6 5 14z" fill="#444"/></svg><div class="b" style="left:546px;top:438.9666666666667px;width:58px;height:15px;border-radius:4px;background:#ffc107"></div><div class="t" style="left:550.25px;top:441.46px;font-size:10.4px;font-weight:bold;letter-spacing:-0.339px;color:#1f2d3d;">Bekliyoruz</div><svg class="i" style="left:430px;top:466.91px;width:7.30px;height:9.73px;color:#212529" viewBox="0 0 9 12"><path d="M3 0.6V10.2c0 .8.5 1.2 1.2 1.2 2.6 0 4.2-1.6 4.2-4" fill="none" stroke="currentColor" stroke-width="1.32" stroke-linecap="round"/><path d="M0.7 5.9L6.6 3.5M0.7 8.4L6.6 6" stroke="currentColor" stroke-width="1.1" stroke-linecap="round"/></svg><div class="t" style="left:441.14px;top:465.80px;font-size:12.8px;letter-spacing:-0.228px;color:#212529;">80,910</div><svg class="i" style="left:529px;top:464.83333333333337px;width:14px;height:14px;" viewBox="0 0 14 14"><path d="M14 0L0 8l4 1.6z" fill="#a3a3a3"/><path d="M14 0L4 9.6 5 14l2.5-3.2 4 2z" fill="#9a9a9a"/><path d="M14 0L4 9.6 5 14z" fill="#444"/></svg><div class="b" style="left:546px;top:465.1333333333334px;width:58px;height:15px;border-radius:4px;background:#ffc107"></div><div class="t" style="left:550.25px;top:467.63px;font-size:10.4px;font-weight:bold;letter-spacing:-0.339px;color:#1f2d3d;">Bekliyoruz</div><svg class="i" style="left:430px;top:493.07px;width:7.30px;height:9.73px;color:#212529" viewBox="0 0 9 12"><path d="M3 0.6V10.2c0 .8.5 1.2 1.2 1.2 2.6 0 4.2-1.6 4.2-4" fill="none" stroke="currentColor" stroke-width="1.32" stroke-linecap="round"/><path d="M0.7 5.9L6.6 3.5M0.7 8.4L6.6 6" stroke="currentColor" stroke-width="1.1" stroke-linecap="round"/></svg><div class="t" style="left:441.14px;top:491.96px;font-size:12.8px;letter-spacing:-0.256px;color:#212529;">1,050</div><svg class="i" style="left:529px;top:491.0px;width:14px;height:14px;" viewBox="0 0 14 14"><path d="M14 0L0 8l4 1.6z" fill="#a3a3a3"/><path d="M14 0L4 9.6 5 14l2.5-3.2 4 2z" fill="#9a9a9a"/><path d="M14 0L4 9.6 5 14z" fill="#444"/></svg><div class="b" style="left:546px;top:491.3px;width:58px;height:15px;border-radius:4px;background:#ffc107"></div><div class="t" style="left:550.25px;top:493.80px;font-size:10.4px;font-weight:bold;letter-spacing:-0.339px;color:#1f2d3d;">Bekliyoruz</div><svg class="i" style="left:430px;top:519.24px;width:7.30px;height:9.73px;color:#212529" viewBox="0 0 9 12"><path d="M3 0.6V10.2c0 .8.5 1.2 1.2 1.2 2.6 0 4.2-1.6 4.2-4" fill="none" stroke="currentColor" stroke-width="1.32" stroke-linecap="round"/><path d="M0.7 5.9L6.6 3.5M0.7 8.4L6.6 6" stroke="currentColor" stroke-width="1.1" stroke-linecap="round"/></svg><div class="t" style="left:441.14px;top:518.13px;font-size:12.8px;letter-spacing:-0.256px;color:#212529;">4,100</div><svg class="i" style="left:529px;top:517.1666666666667px;width:14px;height:14px;" viewBox="0 0 14 14"><path d="M14 0L0 8l4 1.6z" fill="#a3a3a3"/><path d="M14 0L4 9.6 5 14l2.5-3.2 4 2z" fill="#9a9a9a"/><path d="M14 0L4 9.6 5 14z" fill="#444"/></svg><div class="b" style="left:546px;top:517.4666666666667px;width:58px;height:15px;border-radius:4px;background:#ffc107"></div><div class="t" style="left:550.25px;top:519.96px;font-size:10.4px;font-weight:bold;letter-spacing:-0.339px;color:#1f2d3d;">Bekliyoruz</div><svg class="i" style="left:430px;top:545.41px;width:7.30px;height:9.73px;color:#212529" viewBox="0 0 9 12"><path d="M3 0.6V10.2c0 .8.5 1.2 1.2 1.2 2.6 0 4.2-1.6 4.2-4" fill="none" stroke="currentColor" stroke-width="1.32" stroke-linecap="round"/><path d="M0.7 5.9L6.6 3.5M0.7 8.4L6.6 6" stroke="currentColor" stroke-width="1.1" stroke-linecap="round"/></svg><div class="t" style="left:441.14px;top:544.30px;font-size:12.8px;letter-spacing:-0.256px;color:#212529;">6,500</div><svg class="i" style="left:527px;top:543.1333333333333px;width:14px;height:14px;" viewBox="0 0 14 14"><path d="M7 0L0.5 4.3V13.3H13.5V4.3z" fill="#1b1b1b"/><path d="M3 2.3H11V8.6L7 11 3 8.6z" fill="#b4b4b4"/><rect x="4.6" y="4.2" width="4.8" height="1.1" fill="#2a2a2a"/><rect x="4.6" y="6.3" width="4.8" height="1.1" fill="#2a2a2a"/><path d="M0.7 6.6L7 10.6 13.3 6.6" fill="none" stroke="#fff" stroke-width="1.2"/></svg><div class="b" style="left:544px;top:543.6333333333333px;width:60px;height:15px;border-radius:4px;background:#28a745"></div><div class="t" style="left:549.00px;top:546.13px;font-size:10.4px;font-weight:bold;letter-spacing:-0.604px;color:#fff;">Cevaplandı</div><div class="b" style="left:254px;top:595px;width:374px;height:204px;background:#fff;border-radius:4px;border-top:3px solid #0b5ed7;box-shadow:0 0 1px rgba(0,0,0,.2),0 1px 3px rgba(0,0,0,.22)"></div><div class="b" style="left:254px;top:647px;width:374px;height:1px;background:#e4e6e9"></div><div class="t" style="left:273.80px;top:611.93px;font-size:15.2px;font-weight:bold;letter-spacing:-0.141px;color:#111;">EN SON FATURALAR</div><div class="b" style="left:558px;top:609px;width:50px;height:26px;border:1px solid #3fa3b3;border-radius:3px"></div><div class="t" style="left:566.50px;top:615.90px;font-size:13px;letter-spacing:-0.059px;color:#17a2b8;">Hepsi</div><div class="b" style="left:254px;top:648.00px;width:374px;height:24.83px;background:#f2f2f2"></div><div class="b" style="left:254px;top:697.67px;width:374px;height:24.83px;background:#f2f2f2"></div><div class="b" style="left:254px;top:747.33px;width:374px;height:24.83px;background:#f2f2f2"></div><svg class="i" style="left:270px;top:649px;width:154px;height:148.0px;overflow:hidden"><rect width="154" height="149.0" fill="#fff" opacity=".95" mask="url(#fadew)"/><g mask="url(#fadew)"><rect width="146" height="149.0" filter="url(#nzs)"/></g><g mask="url(#fade)"><g mask="url(#fadevm)"><rect x="0" y="-2.0" width="142" height="28.8" filter="url(#nz)"/></g></g><g mask="url(#fade)"><g mask="url(#fadevm)"><rect x="0" y="22.8" width="113" height="28.8" filter="url(#nz)"/></g></g><g mask="url(#fade)"><g mask="url(#fadevm)"><rect x="0" y="47.7" width="108" height="28.8" filter="url(#nz)"/></g></g><g mask="url(#fade)"><g mask="url(#fadevm)"><rect x="0" y="72.5" width="174" height="28.8" filter="url(#nz)"/></g></g><g mask="url(#fade)"><g mask="url(#fadevm)"><rect x="0" y="97.3" width="147" height="28.8" filter="url(#nz)"/></g></g><g mask="url(#fade)"><g mask="url(#fadevm)"><rect x="0" y="122.2" width="152" height="28.8" filter="url(#nz)"/></g></g></svg><svg class="i" style="left:481.5px;top:655.97px;width:7.30px;height:9.73px;color:#212529" viewBox="0 0 9 12"><path d="M3 0.6V10.2c0 .8.5 1.2 1.2 1.2 2.6 0 4.2-1.6 4.2-4" fill="none" stroke="currentColor" stroke-width="1.32" stroke-linecap="round"/><path d="M0.7 5.9L6.6 3.5M0.7 8.4L6.6 6" stroke="currentColor" stroke-width="1.1" stroke-linecap="round"/></svg><div class="t" style="left:492.64px;top:654.86px;font-size:12.8px;letter-spacing:-0.256px;color:#212529;">9,100</div><svg class="i" style="left:594.5px;top:654.0px;width:11px;height:14px;" viewBox="0 0 11 14"><path d="M2 1.5L5.5 7 2 12.5M9 1.5L5.5 7 9 12.5" fill="none" stroke="#f0c33c" stroke-width="1.1"/><rect x="0.8" y="0.2" width="9.4" height="1.5" fill="#f0c33c"/><rect x="0.8" y="12.3" width="9.4" height="1.5" fill="#f0c33c"/></svg><svg class="i" style="left:481.5px;top:680.81px;width:7.30px;height:9.73px;color:#212529" viewBox="0 0 9 12"><path d="M3 0.6V10.2c0 .8.5 1.2 1.2 1.2 2.6 0 4.2-1.6 4.2-4" fill="none" stroke="currentColor" stroke-width="1.32" stroke-linecap="round"/><path d="M0.7 5.9L6.6 3.5M0.7 8.4L6.6 6" stroke="currentColor" stroke-width="1.1" stroke-linecap="round"/></svg><div class="t" style="left:492.64px;top:679.70px;font-size:12.8px;letter-spacing:-0.228px;color:#212529;">23,000</div><svg class="i" style="left:594.5px;top:678.8333333333334px;width:11px;height:14px;" viewBox="0 0 11 14"><path d="M2 1.5L5.5 7 2 12.5M9 1.5L5.5 7 9 12.5" fill="none" stroke="#f0c33c" stroke-width="1.1"/><rect x="0.8" y="0.2" width="9.4" height="1.5" fill="#f0c33c"/><rect x="0.8" y="12.3" width="9.4" height="1.5" fill="#f0c33c"/></svg><svg class="i" style="left:481.5px;top:705.64px;width:7.30px;height:9.73px;color:#212529" viewBox="0 0 9 12"><path d="M3 0.6V10.2c0 .8.5 1.2 1.2 1.2 2.6 0 4.2-1.6 4.2-4" fill="none" stroke="currentColor" stroke-width="1.32" stroke-linecap="round"/><path d="M0.7 5.9L6.6 3.5M0.7 8.4L6.6 6" stroke="currentColor" stroke-width="1.1" stroke-linecap="round"/></svg><div class="t" style="left:492.64px;top:704.53px;font-size:12.8px;letter-spacing:-0.228px;color:#212529;">52,500</div><svg class="i" style="left:594.5px;top:703.6666666666666px;width:11px;height:14px;" viewBox="0 0 11 14"><path d="M2 1.5L5.5 7 2 12.5M9 1.5L5.5 7 9 12.5" fill="none" stroke="#f0c33c" stroke-width="1.1"/><rect x="0.8" y="0.2" width="9.4" height="1.5" fill="#f0c33c"/><rect x="0.8" y="12.3" width="9.4" height="1.5" fill="#f0c33c"/></svg><svg class="i" style="left:481.5px;top:730.47px;width:7.30px;height:9.73px;color:#212529" viewBox="0 0 9 12"><path d="M3 0.6V10.2c0 .8.5 1.2 1.2 1.2 2.6 0 4.2-1.6 4.2-4" fill="none" stroke="currentColor" stroke-width="1.32" stroke-linecap="round"/><path d="M0.7 5.9L6.6 3.5M0.7 8.4L6.6 6" stroke="currentColor" stroke-width="1.1" stroke-linecap="round"/></svg><div class="t" style="left:492.64px;top:729.36px;font-size:12.8px;letter-spacing:-0.038px;color:#212529;">11,000</div><svg class="i" style="left:594.5px;top:728.5px;width:11px;height:14px;" viewBox="0 0 11 14"><path d="M2 1.5L5.5 7 2 12.5M9 1.5L5.5 7 9 12.5" fill="none" stroke="#f0c33c" stroke-width="1.1"/><rect x="0.8" y="0.2" width="9.4" height="1.5" fill="#f0c33c"/><rect x="0.8" y="12.3" width="9.4" height="1.5" fill="#f0c33c"/></svg><svg class="i" style="left:481.5px;top:755.31px;width:7.30px;height:9.73px;color:#212529" viewBox="0 0 9 12"><path d="M3 0.6V10.2c0 .8.5 1.2 1.2 1.2 2.6 0 4.2-1.6 4.2-4" fill="none" stroke="currentColor" stroke-width="1.32" stroke-linecap="round"/><path d="M0.7 5.9L6.6 3.5M0.7 8.4L6.6 6" stroke="currentColor" stroke-width="1.1" stroke-linecap="round"/></svg><div class="t" style="left:492.64px;top:754.20px;font-size:12.8px;letter-spacing:-0.126px;color:#212529;">203,866</div><svg class="i" style="left:592px;top:752.8333333333334px;width:14px;height:14px;" viewBox="0 0 14 14"><g fill="none" stroke="#2a6fdb" stroke-width="1.3"><ellipse cx="9" cy="3" rx="4" ry="2"/><path d="M13 3v3c0 1-1 1.7-2.5 2"/><ellipse cx="5.5" cy="7.5" rx="4.8" ry="2.1"/><path d="M0.7 7.5v4.3c0 1.2 2.1 2.1 4.8 2.1s4.8-.9 4.8-2.1V7.5M0.7 9.8c0 1.2 2.1 2.1 4.8 2.1s4.8-.9 4.8-2.1"/></g></svg><svg class="i" style="left:481.5px;top:780.14px;width:7.30px;height:9.73px;color:#212529" viewBox="0 0 9 12"><path d="M3 0.6V10.2c0 .8.5 1.2 1.2 1.2 2.6 0 4.2-1.6 4.2-4" fill="none" stroke="currentColor" stroke-width="1.32" stroke-linecap="round"/><path d="M0.7 5.9L6.6 3.5M0.7 8.4L6.6 6" stroke="currentColor" stroke-width="1.1" stroke-linecap="round"/></svg><div class="t" style="left:492.64px;top:779.03px;font-size:12.8px;letter-spacing:-0.228px;color:#212529;">25,909</div><svg class="i" style="left:592px;top:777.6666666666666px;width:14px;height:14px;" viewBox="0 0 14 14"><g fill="none" stroke="#2a6fdb" stroke-width="1.3"><ellipse cx="9" cy="3" rx="4" ry="2"/><path d="M13 3v3c0 1-1 1.7-2.5 2"/><ellipse cx="5.5" cy="7.5" rx="4.8" ry="2.1"/><path d="M0.7 7.5v4.3c0 1.2 2.1 2.1 4.8 2.1s4.8-.9 4.8-2.1V7.5M0.7 9.8c0 1.2 2.1 2.1 4.8 2.1s4.8-.9 4.8-2.1"/></g></svg><div class="b" style="left:643px;top:582px;width:374px;height:204px;background:#fff;border-radius:4px;border-top:3px solid #0b5ed7;box-shadow:0 0 1px rgba(0,0,0,.2),0 1px 3px rgba(0,0,0,.22)"></div><div class="b" style="left:643px;top:634px;width:374px;height:1px;background:#e4e6e9"></div><div class="t" style="left:663.50px;top:598.13px;font-size:15.2px;font-weight:bold;letter-spacing:-0.029px;color:#111;">EN SON TAHSİLATLAR</div><div class="b" style="left:947px;top:596px;width:50px;height:26px;border:1px solid #3fa3b3;border-radius:3px"></div><div class="t" style="left:955.50px;top:602.90px;font-size:13px;letter-spacing:-0.059px;color:#17a2b8;">Hepsi</div><div class="b" style="left:643px;top:635.00px;width:374px;height:25.00px;background:#f2f2f2"></div><div class="b" style="left:643px;top:685.00px;width:374px;height:25.00px;background:#f2f2f2"></div><div class="b" style="left:643px;top:735.00px;width:374px;height:25.00px;background:#f2f2f2"></div><svg class="i" style="left:660px;top:636px;width:118px;height:149.0px;overflow:hidden"><rect width="118" height="150.0" fill="#fff" opacity=".95" mask="url(#fadew)"/><g mask="url(#fadew)"><rect width="110" height="150.0" filter="url(#nzs)"/></g><g mask="url(#fade)"><g mask="url(#fadevm)"><rect x="0" y="-2.0" width="138" height="29.0" filter="url(#nz)"/></g></g><g mask="url(#fade)"><g mask="url(#fadevm)"><rect x="0" y="23.0" width="127" height="29.0" filter="url(#nz)"/></g></g><g mask="url(#fade)"><g mask="url(#fadevm)"><rect x="0" y="48.0" width="138" height="29.0" filter="url(#nz)"/></g></g><g mask="url(#fade)"><g mask="url(#fadevm)"><rect x="0" y="73.0" width="137" height="29.0" filter="url(#nz)"/></g></g><g mask="url(#fade)"><g mask="url(#fadevm)"><rect x="0" y="98.0" width="132" height="29.0" filter="url(#nz)"/></g></g><g mask="url(#fade)"><g mask="url(#fadevm)"><rect x="0" y="123.0" width="113" height="29.0" filter="url(#nz)"/></g></g></svg><svg class="i" style="left:853.5px;top:642.77px;width:7.30px;height:9.73px;color:#212529" viewBox="0 0 9 12"><path d="M3 0.6V10.2c0 .8.5 1.2 1.2 1.2 2.6 0 4.2-1.6 4.2-4" fill="none" stroke="currentColor" stroke-width="1.32" stroke-linecap="round"/><path d="M0.7 5.9L6.6 3.5M0.7 8.4L6.6 6" stroke="currentColor" stroke-width="1.1" stroke-linecap="round"/></svg><div class="t" style="left:864.64px;top:641.66px;font-size:12.8px;letter-spacing:-0.256px;color:#212529;">5,100</div><svg class="i" style="left:980.5px;top:640.5px;width:14px;height:14px;" viewBox="0 0 14 14"><g fill="none" stroke="#2a6fdb" stroke-width="1.3"><ellipse cx="9" cy="3" rx="4" ry="2"/><path d="M13 3v3c0 1-1 1.7-2.5 2"/><ellipse cx="5.5" cy="7.5" rx="4.8" ry="2.1"/><path d="M0.7 7.5v4.3c0 1.2 2.1 2.1 4.8 2.1s4.8-.9 4.8-2.1V7.5M0.7 9.8c0 1.2 2.1 2.1 4.8 2.1s4.8-.9 4.8-2.1"/></g></svg><svg class="i" style="left:853.5px;top:667.77px;width:7.30px;height:9.73px;color:#212529" viewBox="0 0 9 12"><path d="M3 0.6V10.2c0 .8.5 1.2 1.2 1.2 2.6 0 4.2-1.6 4.2-4" fill="none" stroke="currentColor" stroke-width="1.32" stroke-linecap="round"/><path d="M0.7 5.9L6.6 3.5M0.7 8.4L6.6 6" stroke="currentColor" stroke-width="1.1" stroke-linecap="round"/></svg><div class="t" style="left:864.64px;top:666.66px;font-size:12.8px;letter-spacing:-0.228px;color:#212529;">39,621</div><svg class="i" style="left:980.5px;top:665.5px;width:14px;height:14px;" viewBox="0 0 14 14"><ellipse cx="9" cy="3" rx="4" ry="2" fill="#7fb0ee"/><path d="M5 3v2.5c0 1 1.8 2 4 2s4-1 4-2V3" fill="#7fb0ee"/><ellipse cx="5.5" cy="7.5" rx="5" ry="2.2" fill="#2a6fdb"/><path d="M0.5 7.5v4.5c0 1.2 2.2 2.2 5 2.2s5-1 5-2.2V7.5" fill="#2a6fdb"/><path d="M0.5 10c0 1.2 2.2 2.2 5 2.2s5-1 5-2.2" fill="none" stroke="#fff" stroke-width=".8"/></svg><svg class="i" style="left:853.5px;top:692.77px;width:7.30px;height:9.73px;color:#212529" viewBox="0 0 9 12"><path d="M3 0.6V10.2c0 .8.5 1.2 1.2 1.2 2.6 0 4.2-1.6 4.2-4" fill="none" stroke="currentColor" stroke-width="1.32" stroke-linecap="round"/><path d="M0.7 5.9L6.6 3.5M0.7 8.4L6.6 6" stroke="currentColor" stroke-width="1.1" stroke-linecap="round"/></svg><div class="t" style="left:864.64px;top:691.66px;font-size:12.8px;letter-spacing:-0.228px;color:#212529;">19,000</div><svg class="i" style="left:980.5px;top:690.5px;width:14px;height:14px;" viewBox="0 0 14 14"><g fill="none" stroke="#2a6fdb" stroke-width="1.3"><ellipse cx="9" cy="3" rx="4" ry="2"/><path d="M13 3v3c0 1-1 1.7-2.5 2"/><ellipse cx="5.5" cy="7.5" rx="4.8" ry="2.1"/><path d="M0.7 7.5v4.3c0 1.2 2.1 2.1 4.8 2.1s4.8-.9 4.8-2.1V7.5M0.7 9.8c0 1.2 2.1 2.1 4.8 2.1s4.8-.9 4.8-2.1"/></g></svg><svg class="i" style="left:853.5px;top:717.77px;width:7.30px;height:9.73px;color:#212529" viewBox="0 0 9 12"><path d="M3 0.6V10.2c0 .8.5 1.2 1.2 1.2 2.6 0 4.2-1.6 4.2-4" fill="none" stroke="currentColor" stroke-width="1.32" stroke-linecap="round"/><path d="M0.7 5.9L6.6 3.5M0.7 8.4L6.6 6" stroke="currentColor" stroke-width="1.1" stroke-linecap="round"/></svg><div class="t" style="left:864.64px;top:716.66px;font-size:12.8px;letter-spacing:-0.038px;color:#212529;">11,900</div><svg class="i" style="left:980.5px;top:715.5px;width:14px;height:14px;" viewBox="0 0 14 14"><ellipse cx="9" cy="3" rx="4" ry="2" fill="#7fb0ee"/><path d="M5 3v2.5c0 1 1.8 2 4 2s4-1 4-2V3" fill="#7fb0ee"/><ellipse cx="5.5" cy="7.5" rx="5" ry="2.2" fill="#2a6fdb"/><path d="M0.5 7.5v4.5c0 1.2 2.2 2.2 5 2.2s5-1 5-2.2V7.5" fill="#2a6fdb"/><path d="M0.5 10c0 1.2 2.2 2.2 5 2.2s5-1 5-2.2" fill="none" stroke="#fff" stroke-width=".8"/></svg><svg class="i" style="left:853.5px;top:742.77px;width:7.30px;height:9.73px;color:#212529" viewBox="0 0 9 12"><path d="M3 0.6V10.2c0 .8.5 1.2 1.2 1.2 2.6 0 4.2-1.6 4.2-4" fill="none" stroke="currentColor" stroke-width="1.32" stroke-linecap="round"/><path d="M0.7 5.9L6.6 3.5M0.7 8.4L6.6 6" stroke="currentColor" stroke-width="1.1" stroke-linecap="round"/></svg><div class="t" style="left:864.64px;top:741.66px;font-size:12.8px;letter-spacing:-0.228px;color:#212529;">37,145</div><svg class="i" style="left:980.5px;top:740.5px;width:14px;height:14px;" viewBox="0 0 14 14"><g fill="none" stroke="#2a6fdb" stroke-width="1.3"><ellipse cx="9" cy="3" rx="4" ry="2"/><path d="M13 3v3c0 1-1 1.7-2.5 2"/><ellipse cx="5.5" cy="7.5" rx="4.8" ry="2.1"/><path d="M0.7 7.5v4.3c0 1.2 2.1 2.1 4.8 2.1s4.8-.9 4.8-2.1V7.5M0.7 9.8c0 1.2 2.1 2.1 4.8 2.1s4.8-.9 4.8-2.1"/></g></svg><svg class="i" style="left:853.5px;top:767.77px;width:7.30px;height:9.73px;color:#212529" viewBox="0 0 9 12"><path d="M3 0.6V10.2c0 .8.5 1.2 1.2 1.2 2.6 0 4.2-1.6 4.2-4" fill="none" stroke="currentColor" stroke-width="1.32" stroke-linecap="round"/><path d="M0.7 5.9L6.6 3.5M0.7 8.4L6.6 6" stroke="currentColor" stroke-width="1.1" stroke-linecap="round"/></svg><div class="t" style="left:864.64px;top:766.66px;font-size:12.8px;letter-spacing:-0.228px;color:#212529;">33,000</div><svg class="i" style="left:980.5px;top:765.5px;width:14px;height:14px;" viewBox="0 0 14 14"><g fill="none" stroke="#2a6fdb" stroke-width="1.3"><ellipse cx="9" cy="3" rx="4" ry="2"/><path d="M13 3v3c0 1-1 1.7-2.5 2"/><ellipse cx="5.5" cy="7.5" rx="4.8" ry="2.1"/><path d="M0.7 7.5v4.3c0 1.2 2.1 2.1 4.8 2.1s4.8-.9 4.8-2.1V7.5M0.7 9.8c0 1.2 2.1 2.1 4.8 2.1s4.8-.9 4.8-2.1"/></g></svg><div class="b" style="left:643px;top:196px;width:374px;height:354px;background:#fff;border-radius:4px;border-top:3px solid #0b5ed7;box-shadow:0 0 1px rgba(0,0,0,.2),0 1px 3px rgba(0,0,0,.22)"></div><div class="b" style="left:643px;top:240px;width:374px;height:1px;background:#e4e6e9"></div><div class="t" style="left:663.40px;top:213.03px;font-size:15.2px;font-weight:bold;letter-spacing:0.077px;color:#111;">Kategori Bazında Satışlar</div><div class="b" style="left:959px;top:219px;width:11px;height:1.6px;background:#cfd2d5"></div><svg class="i" style="left:991px;top:215px;width:9px;height:9px;" viewBox="0 0 9 9"><path d="M1 1l7 7M8 1L1 8" stroke="#cfd2d5" stroke-width="1.6"/></svg><svg class="i" style="left:643px;top:250px;width:374px;height:180px;" viewBox="0 0 374 180"><path d="M187.90 12.40A77.2 77.2 0 0 1 243.43 35.97L217.18 61.33A40.7 40.7 0 0 0 187.90 48.90Z" fill="#e8e2d2" stroke="#fff" stroke-width="2" stroke-linejoin="round"/><path d="M243.43 35.97A77.2 77.2 0 0 1 203.95 165.11L196.36 129.41A40.7 40.7 0 0 0 217.18 61.33Z" fill="#de7ef0" stroke="#fff" stroke-width="2" stroke-linejoin="round"/><path d="M203.95 165.11A77.2 77.2 0 0 1 199.31 165.95L193.92 129.85A40.7 40.7 0 0 0 196.36 129.41Z" fill="#2a5fb8" stroke="#fff" stroke-width="2" stroke-linejoin="round"/><path d="M199.31 165.95A77.2 77.2 0 0 1 173.17 165.38L180.13 129.55A40.7 40.7 0 0 0 193.92 129.85Z" fill="#0a43e6" stroke="#fff" stroke-width="2" stroke-linejoin="round"/><path d="M173.17 165.38A77.2 77.2 0 0 1 168.57 164.34L177.71 129.00A40.7 40.7 0 0 0 180.13 129.55Z" fill="#3fd6c2" stroke="#fff" stroke-width="2" stroke-linejoin="round"/><path d="M168.57 164.34A77.2 77.2 0 0 1 187.90 12.40L187.90 48.90A40.7 40.7 0 0 0 177.71 129.00Z" fill="#8c5fb9" stroke="#fff" stroke-width="2" stroke-linejoin="round"/></svg><div class="b" style="left:689px;top:431.0px;width:19px;height:9px;background:#2c1a72"></div><div class="t" style="left:714.00px;top:430.41px;font-size:10.5px;letter-spacing:-0.308px;color:#707070;filter:blur(0.6px);">Kategori Dışı</div><div class="b" style="left:785.5px;top:431.0px;width:19px;height:9px;background:#e8e2d2"></div><div class="t" style="left:810.50px;top:430.41px;font-size:10.5px;letter-spacing:-0.703px;color:#707070;filter:blur(0.6px);">DCM (YENİ)</div><div class="b" style="left:874px;top:431.0px;width:19px;height:9px;background:#de7ef0"></div><div class="t" style="left:899.00px;top:430.41px;font-size:10.5px;letter-spacing:-0.657px;color:#707070;filter:blur(0.6px);">DCM İTEGRATİF</div><div class="b" style="left:683.5px;top:450.0px;width:19px;height:9px;background:#3a72c8"></div><div class="t" style="left:708.50px;top:449.41px;font-size:10.5px;letter-spacing:-0.175px;color:#707070;filter:blur(0.6px);">ATG BAKIM</div><div class="b" style="left:774px;top:450.0px;width:19px;height:9px;background:#c8d6ee"></div><div class="t" style="left:799.00px;top:449.41px;font-size:10.5px;letter-spacing:-0.101px;color:#707070;filter:blur(0.6px);">ATG GELİŞTİRME</div><div class="b" style="left:895px;top:450.0px;width:19px;height:9px;background:#0a43e6"></div><div class="t" style="left:920.00px;top:449.41px;font-size:10.5px;letter-spacing:-0.230px;color:#707070;filter:blur(0.6px);">ATG LİSANS</div><div class="b" style="left:727.5px;top:470.0px;width:19px;height:9px;background:#1c0d22"></div><div class="t" style="left:752.50px;top:469.41px;font-size:10.5px;letter-spacing:-1.016px;color:#707070;filter:blur(0.6px);">AR-GE DESTEK</div><div class="b" style="left:832px;top:470.0px;width:19px;height:9px;background:#e8384f"></div><div class="t" style="left:857.00px;top:469.41px;font-size:10.5px;letter-spacing:-0.333px;color:#707070;filter:blur(0.6px);">YAZILIM LİSANS</div><div class="b" style="left:694px;top:489.8px;width:19px;height:9px;background:#22b845"></div><div class="t" style="left:719.00px;top:489.21px;font-size:10.5px;letter-spacing:-0.322px;color:#707070;filter:blur(0.6px);">IT DANIŞMANLIĞI</div><div class="b" style="left:814.5px;top:489.8px;width:19px;height:9px;background:#3fd6c2"></div><div class="t" style="left:839.50px;top:489.21px;font-size:10.5px;letter-spacing:0.167px;color:#707070;filter:blur(0.6px);">EĞİTİM</div><div class="b" style="left:887px;top:489.8px;width:19px;height:9px;background:#8c5fb9"></div><div class="t" style="left:912.00px;top:489.21px;font-size:10.5px;letter-spacing:-0.415px;color:#707070;filter:blur(0.6px);">DIŞKAYNAK</div><div class="b" style="left:802px;top:510.29999999999995px;width:19px;height:9px;background:#2d5a78"></div><div class="t" style="left:827.00px;top:509.71px;font-size:10.5px;letter-spacing:0.187px;color:#707070;filter:blur(0.6px);">DİĞER</div><div class="b" style="left:1032px;top:196px;width:765px;height:267px;background:#fff;border-radius:4px;border-top:3px solid #0b5ed7;box-shadow:0 0 1px rgba(0,0,0,.2),0 1px 3px rgba(0,0,0,.22)"></div><div class="b" style="left:1032px;top:241px;width:765px;height:1px;background:#e4e6e9"></div><div class="t" style="left:1052.20px;top:213.28px;font-size:15.5px;font-weight:bold;letter-spacing:-0.018px;color:#111;">2022 Yılı Satış ve Tahsilatlar ('000</div><svg class="i" style="left:1301px;top:215.00px;width:8.55px;height:11.40px;color:#111" viewBox="0 0 9 12"><path d="M3 0.6V10.2c0 .8.5 1.2 1.2 1.2 2.6 0 4.2-1.6 4.2-4" fill="none" stroke="currentColor" stroke-width="2.04" stroke-linecap="round"/><path d="M0.7 5.9L6.6 3.5M0.7 8.4L6.6 6" stroke="currentColor" stroke-width="1.7" stroke-linecap="round"/></svg><div class="t" style="left:1313.00px;top:213.28px;font-size:15.5px;font-weight:bold;color:#111;">)</div><div class="b" style="left:1738px;top:219.5px;width:11px;height:1.6px;background:#cfd2d5"></div><svg class="i" style="left:1770px;top:216px;width:9px;height:9px;" viewBox="0 0 9 9"><path d="M1 1l7 7M8 1L1 8" stroke="#cfd2d5" stroke-width="1.6"/></svg><div class="b" style="left:1328.5px;top:251px;width:41.5px;height:13.5px;background:#a593c2;border:2.5px solid #5e9ccd"></div><div class="t" style="left:1375.60px;top:251.22px;font-size:12.5px;letter-spacing:-0.496px;color:#666;">Satış</div><div class="b" style="left:1412px;top:251px;width:41.5px;height:13.5px;background:#d2d6de"></div><div class="t" style="left:1459.00px;top:251.22px;font-size:12.5px;letter-spacing:-0.012px;color:#666;">Tahsilat</div><div class="t" style="left:1067.16px;top:426.49px;font-size:12.3px;color:#555;">0</div><div class="t" style="left:1053.48px;top:403.91px;font-size:12.3px;color:#555;">500</div><div class="t" style="left:1046.64px;top:381.33px;font-size:12.3px;color:#555;">1000</div><div class="t" style="left:1046.64px;top:358.75px;font-size:12.3px;color:#555;">1500</div><div class="t" style="left:1046.64px;top:336.17px;font-size:12.3px;color:#555;">2000</div><div class="t" style="left:1046.64px;top:313.59px;font-size:12.3px;color:#555;">2500</div><div class="t" style="left:1046.64px;top:291.01px;font-size:12.3px;color:#555;">3000</div><div class="t" style="left:1046.64px;top:268.43px;font-size:12.3px;color:#555;">3500</div><div class="t" style="left:1072.72px;top:442.39px;font-size:12.3px;color:#555;">Oca</div><div class="t" style="left:1136.15px;top:442.39px;font-size:12.3px;color:#555;">Şub</div><div class="t" style="left:1199.59px;top:442.39px;font-size:12.3px;color:#555;">Mar</div><div class="t" style="left:1264.39px;top:442.39px;font-size:12.3px;color:#555;">Nis</div><div class="t" style="left:1324.74px;top:442.39px;font-size:12.3px;color:#555;">May</div><div class="t" style="left:1388.52px;top:442.39px;font-size:12.3px;color:#555;">Haz</div><div class="t" style="left:1450.92px;top:442.39px;font-size:12.3px;color:#555;">Tem</div><div class="t" style="left:1514.69px;top:442.39px;font-size:12.3px;color:#555;">Ağu</div><div class="t" style="left:1580.18px;top:442.39px;font-size:12.3px;color:#555;">Eyl</div><div class="t" style="left:1643.27px;top:442.39px;font-size:12.3px;color:#555;">Eki</div><div class="t" style="left:1704.31px;top:442.39px;font-size:12.3px;color:#555;">Kas</div><div class="t" style="left:1768.42px;top:442.39px;font-size:12.3px;color:#555;">Ara</div><svg class="i" style="left:1032px;top:250px;width:765px;height:200px;" viewBox="0 0 765 200"><path d="M47 182.40H745.99" stroke="#d6d6d6" stroke-width="1"/><path d="M47 159.82H745.99" stroke="#d6d6d6" stroke-width="1"/><path d="M47 137.24H745.99" stroke="#d6d6d6" stroke-width="1"/><path d="M47 114.66H745.99" stroke="#d6d6d6" stroke-width="1"/><path d="M47 92.08H745.99" stroke="#d6d6d6" stroke-width="1"/><path d="M47 69.50H745.99" stroke="#d6d6d6" stroke-width="1"/><path d="M47 46.92H745.99" stroke="#d6d6d6" stroke-width="1"/><path d="M47 24.34H745.99" stroke="#d6d6d6" stroke-width="1"/><path d="M52.00 24.34V187.40" stroke="#d6d6d6" stroke-width="1"/><path d="M115.09 24.34V187.40" stroke="#d6d6d6" stroke-width="1"/><path d="M178.18 24.34V187.40" stroke="#d6d6d6" stroke-width="1"/><path d="M241.27 24.34V187.40" stroke="#d6d6d6" stroke-width="1"/><path d="M304.36 24.34V187.40" stroke="#d6d6d6" stroke-width="1"/><path d="M367.45 24.34V187.40" stroke="#d6d6d6" stroke-width="1"/><path d="M430.54 24.34V187.40" stroke="#d6d6d6" stroke-width="1"/><path d="M493.63 24.34V187.40" stroke="#d6d6d6" stroke-width="1"/><path d="M556.72 24.34V187.40" stroke="#d6d6d6" stroke-width="1"/><path d="M619.81 24.34V187.40" stroke="#d6d6d6" stroke-width="1"/><path d="M682.90 24.34V187.40" stroke="#d6d6d6" stroke-width="1"/><path d="M745.99 24.34V187.40" stroke="#d6d6d6" stroke-width="1"/><path d="M52 24.34V182.40" stroke="#c9c9c9" stroke-width="1"/><path d="M47 182.40H745.99" stroke="#c9c9c9" stroke-width="1"/><path d="M52.00 115.11C52.00 115.11 85.13 44.26 115.09 32.47C135.60 24.39 152.73 64.89 178.18 65.44C203.20 65.97 215.96 35.36 241.27 35.18C266.44 35.00 281.90 48.70 304.36 64.53C332.37 84.28 338.39 108.02 367.45 124.14C388.86 136.02 405.48 129.51 430.54 134.53C455.95 139.62 469.57 140.31 493.63 149.43C520.05 159.45 529.96 175.41 556.72 182.40C580.43 182.40 594.57 182.40 619.81 182.40C645.05 182.40 657.66 182.40 682.90 182.40C708.14 182.40 745.99 182.40 745.99 182.40L745.99 182.40L52 182.40Z" fill="#d2d6de"/><path d="M52.00 83.95C52.00 83.95 92.69 89.85 115.09 80.79C143.17 69.43 150.87 38.30 178.18 32.92C201.34 28.36 219.70 41.05 241.27 55.95C270.17 75.91 274.75 103.55 304.36 120.08C325.23 131.73 347.79 137.38 367.45 126.40C398.26 109.20 406.35 47.55 430.54 49.63C456.82 51.89 464.26 106.34 493.63 137.24C514.73 159.45 528.88 172.44 556.72 182.40C579.36 182.40 594.57 182.40 619.81 182.40C645.05 182.40 657.66 182.40 682.90 182.40C708.14 182.40 745.99 182.40 745.99 182.40L745.99 182.40L52 182.40Z" fill="#a493c0"/><path d="M52.00 115.11C52.00 115.11 85.13 44.26 115.09 32.47C135.60 24.39 152.73 64.89 178.18 65.44C203.20 65.97 215.96 35.36 241.27 35.18C266.44 35.00 281.90 48.70 304.36 64.53C332.37 84.28 338.39 108.02 367.45 124.14C388.86 136.02 405.48 129.51 430.54 134.53C455.95 139.62 469.57 140.31 493.63 149.43C520.05 159.45 529.96 175.41 556.72 182.40C580.43 182.40 594.57 182.40 619.81 182.40C645.05 182.40 657.66 182.40 682.90 182.40C708.14 182.40 745.99 182.40 745.99 182.40" fill="none" stroke="#ffffff" stroke-opacity=".8" stroke-width="2.8"/><path d="M52.00 83.95C52.00 83.95 92.69 89.85 115.09 80.79C143.17 69.43 150.87 38.30 178.18 32.92C201.34 28.36 219.70 41.05 241.27 55.95C270.17 75.91 274.75 103.55 304.36 120.08C325.23 131.73 347.79 137.38 367.45 126.40C398.26 109.20 406.35 47.55 430.54 49.63C456.82 51.89 464.26 106.34 493.63 137.24C514.73 159.45 528.88 172.44 556.72 182.40C579.36 182.40 594.57 182.40 619.81 182.40C645.05 182.40 657.66 182.40 682.90 182.40C708.14 182.40 745.99 182.40 745.99 182.40" fill="none" stroke="#5a9cc9" stroke-width="2.6"/><circle cx="52.00" cy="83.95" r="5" fill="#a08dc0" stroke="#7d8fc4" stroke-width="1.2"/><circle cx="115.09" cy="80.79" r="5" fill="#a08dc0" stroke="#7d8fc4" stroke-width="1.2"/><circle cx="178.18" cy="32.92" r="5" fill="#a08dc0" stroke="#7d8fc4" stroke-width="1.2"/><circle cx="241.27" cy="55.95" r="5" fill="#a08dc0" stroke="#7d8fc4" stroke-width="1.2"/><circle cx="304.36" cy="120.08" r="5" fill="#a08dc0" stroke="#7d8fc4" stroke-width="1.2"/><circle cx="367.45" cy="126.40" r="5" fill="#a08dc0" stroke="#7d8fc4" stroke-width="1.2"/><circle cx="430.54" cy="49.63" r="5" fill="#a08dc0" stroke="#7d8fc4" stroke-width="1.2"/><circle cx="493.63" cy="137.24" r="5" fill="#a08dc0" stroke="#7d8fc4" stroke-width="1.2"/><circle cx="556.72" cy="182.40" r="5" fill="#a08dc0" stroke="#7d8fc4" stroke-width="1.2"/><circle cx="619.81" cy="182.40" r="5" fill="#a08dc0" stroke="#7d8fc4" stroke-width="1.2"/><circle cx="682.90" cy="182.40" r="5" fill="#a08dc0" stroke="#7d8fc4" stroke-width="1.2"/><circle cx="745.99" cy="182.40" r="5" fill="#a08dc0" stroke="#7d8fc4" stroke-width="1.2"/></svg><div class="b" style="left:1032px;top:495px;width:375px;height:322px;background:#fff;border-radius:4px;border-top:3px solid #0b5ed7;box-shadow:0 0 1px rgba(0,0,0,.2),0 1px 3px rgba(0,0,0,.22)"></div><div class="b" style="left:1032px;top:547px;width:375px;height:1px;background:#e4e6e9"></div><div class="t" style="left:1053.20px;top:514.04px;font-size:14.6px;font-weight:bold;letter-spacing:-0.154px;color:#111;">İLK</div><div class="b" style="left:1080.5px;top:509.3px;width:31.5px;height:25.3px;border:1px solid #555;border-radius:3px;background:#fff"></div><div class="t" style="left:1088.79px;top:516.37px;font-size:13.5px;color:#111;">10</div><div class="t" style="left:1117.00px;top:514.04px;font-size:14.6px;font-weight:bold;letter-spacing:0.013px;color:#111;">CARİ BAKİYE</div><div class="b" style="left:1337px;top:509.3px;width:50px;height:25.3px;border:1px solid #3fa3b3;border-radius:3px"></div><div class="t" style="left:1345.50px;top:515.85px;font-size:13px;letter-spacing:-0.059px;color:#17a2b8;">Hepsi</div><div class="b" style="left:1032px;top:547.00px;width:375px;height:25.15px;background:#f2f2f2"></div><div class="b" style="left:1032px;top:572.15px;width:375px;height:1px;background:#dee2e6"></div><div class="b" style="left:1032px;top:597.30px;width:375px;height:25.15px;background:#f2f2f2"></div><div class="b" style="left:1032px;top:597.30px;width:375px;height:1px;background:#dee2e6"></div><div class="b" style="left:1032px;top:622.45px;width:375px;height:1px;background:#dee2e6"></div><div class="b" style="left:1032px;top:647.60px;width:375px;height:25.15px;background:#f2f2f2"></div><div class="b" style="left:1032px;top:647.60px;width:375px;height:1px;background:#dee2e6"></div><div class="b" style="left:1032px;top:672.75px;width:375px;height:1px;background:#dee2e6"></div><div class="b" style="left:1032px;top:697.90px;width:375px;height:25.15px;background:#f2f2f2"></div><div class="b" style="left:1032px;top:697.90px;width:375px;height:1px;background:#dee2e6"></div><div class="b" style="left:1032px;top:723.05px;width:375px;height:1px;background:#dee2e6"></div><div class="b" style="left:1032px;top:748.20px;width:375px;height:25.15px;background:#f2f2f2"></div><div class="b" style="left:1032px;top:748.20px;width:375px;height:1px;background:#dee2e6"></div><div class="b" style="left:1032px;top:773.35px;width:375px;height:1px;background:#dee2e6"></div><svg class="i" style="left:1050px;top:548px;width:206px;height:250.5px;overflow:hidden"><rect width="206" height="251.5" fill="#fff" opacity=".95" mask="url(#fadew)"/><g mask="url(#fadew)"><rect width="198" height="251.5" filter="url(#nzs)"/></g><g mask="url(#fade)"><g mask="url(#fadevm)"><rect x="0" y="-2.0" width="139" height="29.1" filter="url(#nz)"/></g></g><g mask="url(#fade)"><g mask="url(#fadevm)"><rect x="0" y="23.1" width="131" height="29.1" filter="url(#nz)"/></g></g><g mask="url(#fade)"><g mask="url(#fadevm)"><rect x="0" y="48.3" width="96" height="29.1" filter="url(#nz)"/></g></g><g mask="url(#fade)"><g mask="url(#fadevm)"><rect x="0" y="73.4" width="182" height="29.1" filter="url(#nz)"/></g></g><g mask="url(#fade)"><g mask="url(#fadevm)"><rect x="0" y="98.6" width="177" height="29.1" filter="url(#nz)"/></g></g><g mask="url(#fade)"><g mask="url(#fadevm)"><rect x="0" y="123.8" width="118" height="29.1" filter="url(#nz)"/></g></g><g mask="url(#fade)"><g mask="url(#fadevm)"><rect x="0" y="148.9" width="206" height="29.1" filter="url(#nz)"/></g></g><g mask="url(#fade)"><g mask="url(#fadevm)"><rect x="0" y="174.0" width="166" height="29.1" filter="url(#nz)"/></g></g><g mask="url(#fade)"><g mask="url(#fadevm)"><rect x="0" y="199.2" width="169" height="29.1" filter="url(#nz)"/></g></g><g mask="url(#fade)"><g mask="url(#fadevm)"><rect x="0" y="224.3" width="188" height="29.1" filter="url(#nz)"/></g></g></svg><svg class="i" style="left:1255.5px;top:555.92px;width:7.41px;height:9.88px;color:#212529" viewBox="0 0 9 12"><path d="M3 0.6V10.2c0 .8.5 1.2 1.2 1.2 2.6 0 4.2-1.6 4.2-4" fill="none" stroke="currentColor" stroke-width="1.32" stroke-linecap="round"/><path d="M0.7 5.9L6.6 3.5M0.7 8.4L6.6 6" stroke="currentColor" stroke-width="1.1" stroke-linecap="round"/></svg><div class="t" style="left:1266.81px;top:554.80px;font-size:13px;letter-spacing:-0.254px;color:#212529;">1,614,527</div><div class="t" style="left:1334.50px;top:554.80px;font-size:13px;color:#212529;">-</div><svg class="i" style="left:1255.5px;top:581.07px;width:7.41px;height:9.88px;color:#212529" viewBox="0 0 9 12"><path d="M3 0.6V10.2c0 .8.5 1.2 1.2 1.2 2.6 0 4.2-1.6 4.2-4" fill="none" stroke="currentColor" stroke-width="1.32" stroke-linecap="round"/><path d="M0.7 5.9L6.6 3.5M0.7 8.4L6.6 6" stroke="currentColor" stroke-width="1.1" stroke-linecap="round"/></svg><div class="t" style="left:1266.81px;top:579.95px;font-size:13px;letter-spacing:-0.332px;color:#212529;">785,205</div><div class="t" style="left:1334.50px;top:579.95px;font-size:13px;color:#212529;">-</div><svg class="i" style="left:1255.5px;top:606.22px;width:7.41px;height:9.88px;color:#212529" viewBox="0 0 9 12"><path d="M3 0.6V10.2c0 .8.5 1.2 1.2 1.2 2.6 0 4.2-1.6 4.2-4" fill="none" stroke="currentColor" stroke-width="1.32" stroke-linecap="round"/><path d="M0.7 5.9L6.6 3.5M0.7 8.4L6.6 6" stroke="currentColor" stroke-width="1.1" stroke-linecap="round"/></svg><div class="t" style="left:1266.81px;top:605.10px;font-size:13px;letter-spacing:-0.332px;color:#212529;">741,451</div><div class="t" style="left:1334.50px;top:605.10px;font-size:13px;letter-spacing:0.188px;color:#212529;">30 gün</div><svg class="i" style="left:1255.5px;top:631.37px;width:7.41px;height:9.88px;color:#212529" viewBox="0 0 9 12"><path d="M3 0.6V10.2c0 .8.5 1.2 1.2 1.2 2.6 0 4.2-1.6 4.2-4" fill="none" stroke="currentColor" stroke-width="1.32" stroke-linecap="round"/><path d="M0.7 5.9L6.6 3.5M0.7 8.4L6.6 6" stroke="currentColor" stroke-width="1.1" stroke-linecap="round"/></svg><div class="t" style="left:1266.81px;top:630.25px;font-size:13px;letter-spacing:-0.332px;color:#212529;">241,775</div><div class="t" style="left:1334.50px;top:630.25px;font-size:13px;color:#212529;">-</div><svg class="i" style="left:1255.5px;top:656.52px;width:7.41px;height:9.88px;color:#212529" viewBox="0 0 9 12"><path d="M3 0.6V10.2c0 .8.5 1.2 1.2 1.2 2.6 0 4.2-1.6 4.2-4" fill="none" stroke="currentColor" stroke-width="1.32" stroke-linecap="round"/><path d="M0.7 5.9L6.6 3.5M0.7 8.4L6.6 6" stroke="currentColor" stroke-width="1.1" stroke-linecap="round"/></svg><div class="t" style="left:1266.81px;top:655.40px;font-size:13px;letter-spacing:-0.332px;color:#212529;">219,705</div><div class="t" style="left:1334.50px;top:655.40px;font-size:13px;letter-spacing:0.188px;color:#212529;">30 gün</div><svg class="i" style="left:1255.5px;top:681.67px;width:7.41px;height:9.88px;color:#212529" viewBox="0 0 9 12"><path d="M3 0.6V10.2c0 .8.5 1.2 1.2 1.2 2.6 0 4.2-1.6 4.2-4" fill="none" stroke="currentColor" stroke-width="1.32" stroke-linecap="round"/><path d="M0.7 5.9L6.6 3.5M0.7 8.4L6.6 6" stroke="currentColor" stroke-width="1.1" stroke-linecap="round"/></svg><div class="t" style="left:1266.81px;top:680.55px;font-size:13px;letter-spacing:-0.332px;color:#212529;">219,429</div><div class="t" style="left:1334.50px;top:680.55px;font-size:13px;letter-spacing:0.168px;color:#212529;">240 gün</div><svg class="i" style="left:1255.5px;top:706.82px;width:7.41px;height:9.88px;color:#212529" viewBox="0 0 9 12"><path d="M3 0.6V10.2c0 .8.5 1.2 1.2 1.2 2.6 0 4.2-1.6 4.2-4" fill="none" stroke="currentColor" stroke-width="1.32" stroke-linecap="round"/><path d="M0.7 5.9L6.6 3.5M0.7 8.4L6.6 6" stroke="currentColor" stroke-width="1.1" stroke-linecap="round"/></svg><div class="t" style="left:1266.81px;top:705.70px;font-size:13px;letter-spacing:-0.332px;color:#212529;">203,089</div><div class="t" style="left:1334.50px;top:705.70px;font-size:13px;letter-spacing:0.188px;color:#212529;">30 gün</div><svg class="i" style="left:1255.5px;top:731.97px;width:7.41px;height:9.88px;color:#212529" viewBox="0 0 9 12"><path d="M3 0.6V10.2c0 .8.5 1.2 1.2 1.2 2.6 0 4.2-1.6 4.2-4" fill="none" stroke="currentColor" stroke-width="1.32" stroke-linecap="round"/><path d="M0.7 5.9L6.6 3.5M0.7 8.4L6.6 6" stroke="currentColor" stroke-width="1.1" stroke-linecap="round"/></svg><div class="t" style="left:1266.81px;top:730.85px;font-size:13px;letter-spacing:-0.332px;color:#212529;">148,334</div><div class="t" style="left:1334.50px;top:730.85px;font-size:13px;letter-spacing:0.188px;color:#212529;">60 gün</div><svg class="i" style="left:1255.5px;top:757.12px;width:7.41px;height:9.88px;color:#212529" viewBox="0 0 9 12"><path d="M3 0.6V10.2c0 .8.5 1.2 1.2 1.2 2.6 0 4.2-1.6 4.2-4" fill="none" stroke="currentColor" stroke-width="1.32" stroke-linecap="round"/><path d="M0.7 5.9L6.6 3.5M0.7 8.4L6.6 6" stroke="currentColor" stroke-width="1.1" stroke-linecap="round"/></svg><div class="t" style="left:1266.81px;top:756.00px;font-size:13px;letter-spacing:-0.332px;color:#212529;">127,000</div><div class="t" style="left:1334.50px;top:756.00px;font-size:13px;color:#212529;">-</div><svg class="i" style="left:1255.5px;top:782.27px;width:7.41px;height:9.88px;color:#212529" viewBox="0 0 9 12"><path d="M3 0.6V10.2c0 .8.5 1.2 1.2 1.2 2.6 0 4.2-1.6 4.2-4" fill="none" stroke="currentColor" stroke-width="1.32" stroke-linecap="round"/><path d="M0.7 5.9L6.6 3.5M0.7 8.4L6.6 6" stroke="currentColor" stroke-width="1.1" stroke-linecap="round"/></svg><div class="t" style="left:1266.81px;top:781.15px;font-size:13px;letter-spacing:-0.252px;color:#212529;">80,910</div><div class="t" style="left:1334.50px;top:781.15px;font-size:13px;letter-spacing:0.168px;color:#212529;">150 gün</div><div class="b" style="left:1422px;top:495px;width:375px;height:319px;background:#fff;border-radius:4px;border-top:3px solid #0b5ed7;box-shadow:0 0 1px rgba(0,0,0,.2),0 1px 3px rgba(0,0,0,.22)"></div><div class="b" style="left:1422px;top:547px;width:375px;height:1px;background:#e4e6e9"></div><div class="t" style="left:1442.90px;top:512.24px;font-size:14.6px;font-weight:bold;letter-spacing:0.009px;color:#111;">ALACAK VADELERİ</div><div class="b" style="left:1726px;top:509.3px;width:52px;height:25.3px;border:1px solid #3fa3b3;border-radius:3px"></div><div class="t" style="left:1735.50px;top:515.85px;font-size:13px;letter-spacing:-0.059px;color:#17a2b8;">Hepsi</div><div class="b" style="left:1422px;top:547.00px;width:375px;height:24.90px;background:#f2f2f2"></div><div class="b" style="left:1422px;top:571.90px;width:375px;height:1px;background:#dee2e6"></div><div class="b" style="left:1422px;top:596.80px;width:375px;height:24.90px;background:#f2f2f2"></div><div class="b" style="left:1422px;top:596.80px;width:375px;height:1px;background:#dee2e6"></div><div class="b" style="left:1422px;top:621.70px;width:375px;height:1px;background:#dee2e6"></div><div class="b" style="left:1422px;top:646.60px;width:375px;height:24.90px;background:#f2f2f2"></div><div class="b" style="left:1422px;top:646.60px;width:375px;height:1px;background:#dee2e6"></div><div class="b" style="left:1422px;top:671.50px;width:375px;height:1px;background:#dee2e6"></div><div class="b" style="left:1422px;top:696.40px;width:375px;height:24.90px;background:#f2f2f2"></div><div class="b" style="left:1422px;top:696.40px;width:375px;height:1px;background:#dee2e6"></div><div class="b" style="left:1422px;top:721.30px;width:375px;height:1px;background:#dee2e6"></div><div class="b" style="left:1422px;top:746.20px;width:375px;height:24.90px;background:#f2f2f2"></div><div class="b" style="left:1422px;top:746.20px;width:375px;height:1px;background:#dee2e6"></div><div class="b" style="left:1422px;top:771.1px;width:375px;height:1px;background:#dee2e6"></div><div class="t" style="left:1446.40px;top:555.00px;font-size:13px;letter-spacing:0.114px;color:#212529;">0-30 Gün</div><svg class="i" style="left:1601.5px;top:556.12px;width:7.41px;height:9.88px;color:#212529" viewBox="0 0 9 12"><path d="M3 0.6V10.2c0 .8.5 1.2 1.2 1.2 2.6 0 4.2-1.6 4.2-4" fill="none" stroke="currentColor" stroke-width="1.32" stroke-linecap="round"/><path d="M0.7 5.9L6.6 3.5M0.7 8.4L6.6 6" stroke="currentColor" stroke-width="1.1" stroke-linecap="round"/></svg><div class="t" style="left:1612.81px;top:555.00px;font-size:13px;letter-spacing:-0.292px;color:#212529;">3,036,505</div><div class="t" style="left:1725.50px;top:555.00px;font-size:13px;color:#212529;">(18)</div><div class="t" style="left:1446.40px;top:579.90px;font-size:13px;letter-spacing:0.071px;color:#212529;">30-60 Gün</div><svg class="i" style="left:1601.5px;top:581.02px;width:7.41px;height:9.88px;color:#212529" viewBox="0 0 9 12"><path d="M3 0.6V10.2c0 .8.5 1.2 1.2 1.2 2.6 0 4.2-1.6 4.2-4" fill="none" stroke="currentColor" stroke-width="1.32" stroke-linecap="round"/><path d="M0.7 5.9L6.6 3.5M0.7 8.4L6.6 6" stroke="currentColor" stroke-width="1.1" stroke-linecap="round"/></svg><div class="t" style="left:1612.81px;top:579.90px;font-size:13px;letter-spacing:-0.292px;color:#212529;">1,336,453</div><div class="t" style="left:1725.50px;top:579.90px;font-size:13px;color:#212529;">(13)</div><div class="t" style="left:1446.40px;top:604.80px;font-size:13px;letter-spacing:0.071px;color:#212529;">60-90 Gün</div><svg class="i" style="left:1601.5px;top:605.92px;width:7.41px;height:9.88px;color:#212529" viewBox="0 0 9 12"><path d="M3 0.6V10.2c0 .8.5 1.2 1.2 1.2 2.6 0 4.2-1.6 4.2-4" fill="none" stroke="currentColor" stroke-width="1.32" stroke-linecap="round"/><path d="M0.7 5.9L6.6 3.5M0.7 8.4L6.6 6" stroke="currentColor" stroke-width="1.1" stroke-linecap="round"/></svg><div class="t" style="left:1612.81px;top:604.80px;font-size:13px;letter-spacing:-0.185px;color:#212529;">-1,024,993</div><div class="t" style="left:1725.50px;top:604.80px;font-size:13px;color:#212529;">(15)</div><div class="t" style="left:1446.40px;top:629.70px;font-size:13px;letter-spacing:0.037px;color:#212529;">90-120 Gün</div><svg class="i" style="left:1601.5px;top:630.82px;width:7.41px;height:9.88px;color:#212529" viewBox="0 0 9 12"><path d="M3 0.6V10.2c0 .8.5 1.2 1.2 1.2 2.6 0 4.2-1.6 4.2-4" fill="none" stroke="currentColor" stroke-width="1.32" stroke-linecap="round"/><path d="M0.7 5.9L6.6 3.5M0.7 8.4L6.6 6" stroke="currentColor" stroke-width="1.1" stroke-linecap="round"/></svg><div class="t" style="left:1612.81px;top:629.70px;font-size:13px;letter-spacing:-0.171px;color:#212529;">113,676</div><div class="t" style="left:1725.50px;top:629.70px;font-size:13px;color:#212529;">(6)</div><div class="t" style="left:1446.40px;top:654.60px;font-size:13px;letter-spacing:0.011px;color:#212529;">120-150 Gün</div><svg class="i" style="left:1601.5px;top:655.72px;width:7.41px;height:9.88px;color:#212529" viewBox="0 0 9 12"><path d="M3 0.6V10.2c0 .8.5 1.2 1.2 1.2 2.6 0 4.2-1.6 4.2-4" fill="none" stroke="currentColor" stroke-width="1.32" stroke-linecap="round"/><path d="M0.7 5.9L6.6 3.5M0.7 8.4L6.6 6" stroke="currentColor" stroke-width="1.1" stroke-linecap="round"/></svg><div class="t" style="left:1612.81px;top:654.60px;font-size:13px;letter-spacing:-0.252px;color:#212529;">20,263</div><div class="t" style="left:1725.50px;top:654.60px;font-size:13px;color:#212529;">(7)</div><div class="t" style="left:1446.40px;top:679.50px;font-size:13px;letter-spacing:0.011px;color:#212529;">150-180 Gün</div><svg class="i" style="left:1601.5px;top:680.62px;width:7.41px;height:9.88px;color:#212529" viewBox="0 0 9 12"><path d="M3 0.6V10.2c0 .8.5 1.2 1.2 1.2 2.6 0 4.2-1.6 4.2-4" fill="none" stroke="currentColor" stroke-width="1.32" stroke-linecap="round"/><path d="M0.7 5.9L6.6 3.5M0.7 8.4L6.6 6" stroke="currentColor" stroke-width="1.1" stroke-linecap="round"/></svg><div class="t" style="left:1612.81px;top:679.50px;font-size:13px;letter-spacing:-0.332px;color:#212529;">138,360</div><div class="t" style="left:1725.50px;top:679.50px;font-size:13px;color:#212529;">(7)</div><div class="t" style="left:1446.40px;top:704.40px;font-size:13px;letter-spacing:0.015px;color:#212529;">180 Gün Üzeri</div><svg class="i" style="left:1601.5px;top:705.52px;width:7.41px;height:9.88px;color:#212529" viewBox="0 0 9 12"><path d="M3 0.6V10.2c0 .8.5 1.2 1.2 1.2 2.6 0 4.2-1.6 4.2-4" fill="none" stroke="currentColor" stroke-width="1.32" stroke-linecap="round"/><path d="M0.7 5.9L6.6 3.5M0.7 8.4L6.6 6" stroke="currentColor" stroke-width="1.1" stroke-linecap="round"/></svg><div class="t" style="left:1612.81px;top:704.40px;font-size:13px;letter-spacing:-0.332px;color:#212529;">489,952</div><div class="t" style="left:1725.50px;top:704.40px;font-size:13px;color:#212529;">(33)</div><div class="t" style="left:1446.40px;top:729.30px;font-size:13px;font-weight:bold;letter-spacing:0.248px;color:#111;">Toplam</div><svg class="i" style="left:1601.5px;top:730.42px;width:7.41px;height:9.88px;color:#111" viewBox="0 0 9 12"><path d="M3 0.6V10.2c0 .8.5 1.2 1.2 1.2 2.6 0 4.2-1.6 4.2-4" fill="none" stroke="currentColor" stroke-width="2.04" stroke-linecap="round"/><path d="M0.7 5.9L6.6 3.5M0.7 8.4L6.6 6" stroke="currentColor" stroke-width="1.7" stroke-linecap="round"/></svg><div class="t" style="left:1612.81px;top:729.30px;font-size:13px;font-weight:bold;letter-spacing:0.173px;color:#111;">4,110,215</div><div class="t" style="left:1725.50px;top:729.30px;font-size:13px;color:#212529;">(99)</div><div class="t" style="left:1446.40px;top:754.20px;font-size:13px;letter-spacing:-0.011px;color:#212529;">Açılıştan Gelen</div><svg class="i" style="left:1601.5px;top:755.32px;width:7.41px;height:9.88px;color:#212529" viewBox="0 0 9 12"><path d="M3 0.6V10.2c0 .8.5 1.2 1.2 1.2 2.6 0 4.2-1.6 4.2-4" fill="none" stroke="currentColor" stroke-width="1.32" stroke-linecap="round"/><path d="M0.7 5.9L6.6 3.5M0.7 8.4L6.6 6" stroke="currentColor" stroke-width="1.1" stroke-linecap="round"/></svg><div class="t" style="left:1612.81px;top:754.20px;font-size:13px;letter-spacing:-0.171px;color:#212529;">475,311</div><div class="t" style="left:1725.50px;top:754.20px;font-size:13px;color:#212529;">(33)</div><div class="b" style="left:1422px;top:787px;width:375px;height:27px;background:#f7f8f9;border-radius:0 0 4px 4px"></div><div class="b" style="left:1460px;top:788px;width:41.0px;height:25.5px;background:#f8f9fa;border:1px solid #e3e5e8;border-radius:3px"></div><div class="t" style="left:1469.25px;top:795.60px;font-size:13px;letter-spacing:0.224px;color:#212529;">90+</div><div class="b" style="left:1505.7px;top:788px;width:46.3px;height:25.5px;background:#f8f9fa;border:1px solid #e3e5e8;border-radius:3px"></div><div class="t" style="left:1514.35px;top:795.60px;font-size:13px;letter-spacing:-0.094px;color:#212529;">120+</div><div class="b" style="left:1557px;top:788px;width:47.6px;height:25.5px;background:#f8f9fa;border:1px solid #e3e5e8;border-radius:3px"></div><div class="t" style="left:1566.30px;top:795.60px;font-size:13px;letter-spacing:-0.094px;color:#212529;">150+</div><div class="b" style="left:1609.3px;top:788px;width:47.1px;height:25.5px;background:#f8f9fa;border:1px solid #e3e5e8;border-radius:3px"></div><div class="t" style="left:1618.35px;top:795.60px;font-size:13px;letter-spacing:-0.094px;color:#212529;">180+</div><div class="t" style="left:1660.70px;top:793.40px;font-size:13px;letter-spacing:-0.016px;color:#212529;">Gün Olan Cariler</div></body></html>
